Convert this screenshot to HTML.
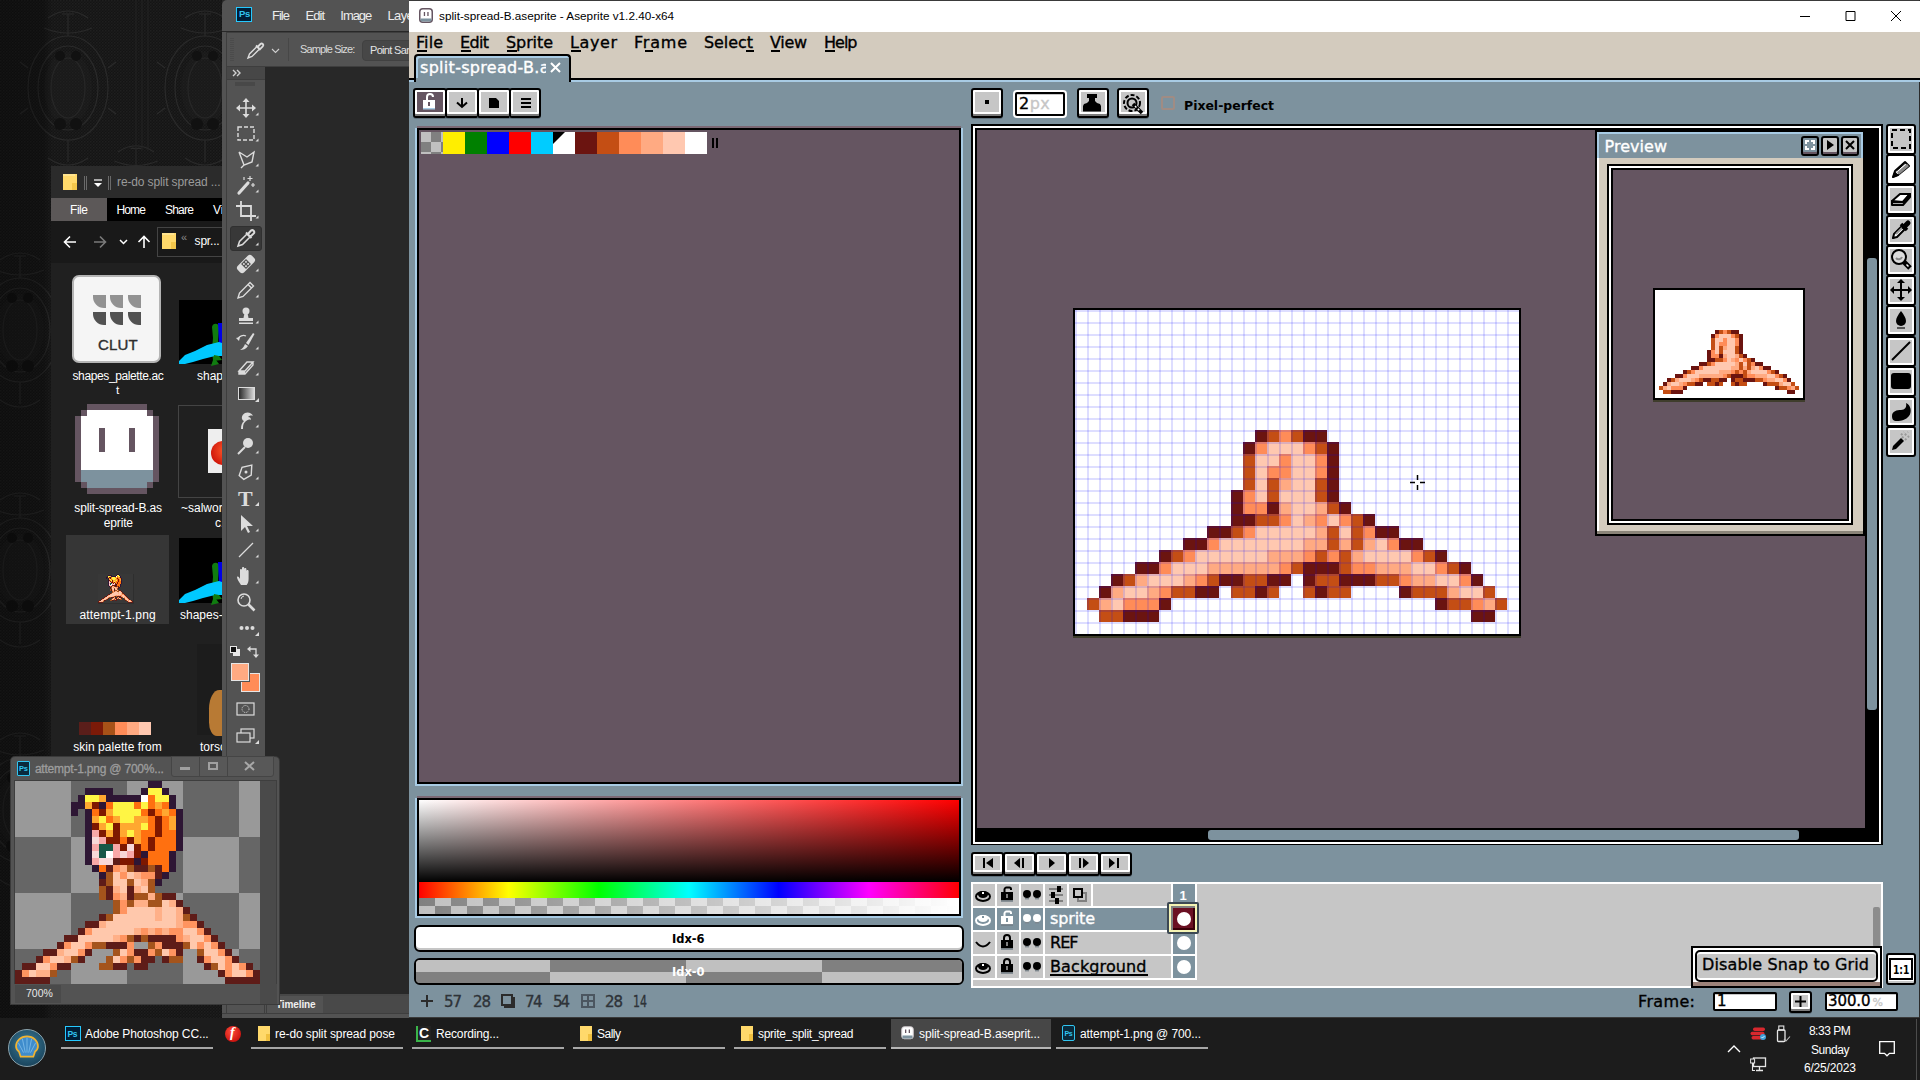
<!DOCTYPE html>
<html lang="en">
<head>
<meta charset="utf-8">
<title>split-spread-B.aseprite - Aseprite v1.2.40-x64</title>
<style>
*{box-sizing:border-box;margin:0;padding:0}
html,body{width:1920px;height:1080px;overflow:hidden;background:#161616}
body{position:relative;font-family:"Liberation Sans",sans-serif;font-size:12px;color:#fff}
.a,.a div{position:absolute}
.t{position:absolute;white-space:nowrap;line-height:1}
svg{position:absolute;overflow:visible}

#desk{left:0;top:0;width:1920px;height:1080px;background:#161616}

#exp{left:0;top:0;width:222px;height:1080px;overflow:hidden}
.lbl{position:absolute;white-space:nowrap;line-height:1;font-size:11.8px;letter-spacing:-0.3px;color:#fff;text-align:center;transform:translateX(-50%)}

#ps{left:0;top:0;width:409px;height:1080px;overflow:hidden}

#ase{left:0;top:0;width:1920px;height:1080px}
.ab{border:2px solid #000;border-radius:3px;background:#c6c6c6;box-shadow:inset 0 -2px 0 #7b7b7b,inset 0 2px 0 #fff,inset 2px 0 0 #fff,inset -2px 0 0 #fff,inset 0 -4px 0 #fff,0 1px 0 #5f707b}
.af{font-family:"DejaVu Sans","Liberation Sans",sans-serif;color:#000;-webkit-text-stroke:0.35px currentColor}
.px{shape-rendering:crispEdges}

#psdoc{left:0;top:0;width:300px;height:1080px}

#tb{left:0;top:1018px;width:1920px;height:62px;background:#1c1c1c}

</style>
</head>
<body>
<!-- desk -->
<div id="desk" class="a">
<svg style="left:0;top:0" width="240" height="1020" viewBox="0 0 240 1020"><defs><pattern id="mesh" width="3" height="3" patternUnits="userSpaceOnUse"><rect width="3" height="3" fill="#141414"/><rect x="0" y="0" width="1.5" height="1.5" fill="#1f1f1f"/><rect x="1.5" y="1.5" width="1.5" height="1.5" fill="#1b1b1b"/></pattern><linearGradient id="lg" x1="0" x2="1"><stop offset="0" stop-color="#000" stop-opacity=".35"/><stop offset="0.18" stop-color="#000" stop-opacity=".3"/><stop offset="0.22" stop-color="#000" stop-opacity="0"/></linearGradient></defs><rect width="240" height="1020" fill="url(#mesh)"/><g transform="translate(68 88) scale(1.0)" fill="none" stroke="#2a2a2a" stroke-width="1.2"><ellipse cx="0" cy="0" rx="40" ry="52"/><ellipse cx="0" cy="0" rx="30" ry="42"/><ellipse cx="0" cy="0" rx="17" ry="30"/><path d="M-40 -20l-8 -6M-40 20l-8 6M40 -20l8 -6M40 20l8 6M0 -52v-22M-6 -74h12M0 52v22"/><path d="M-20 -70q20 -14 40 0M-24 -60q24 10 48 0M-20 70q20 14 40 0"/><ellipse cx="0" cy="0" rx="24" ry="36" fill="#222" fill-opacity=".35" stroke="none"/><circle cx="-8" cy="-32" r="5" fill="#111" stroke="none"/><circle cx="8" cy="-32" r="5" fill="#111" stroke="none"/><circle cx="-8" cy="36" r="6" fill="#111" stroke="none"/><circle cx="8" cy="36" r="6" fill="#111" stroke="none"/></g><g transform="translate(205 88) scale(1.0)" fill="none" stroke="#2a2a2a" stroke-width="1.2"><ellipse cx="0" cy="0" rx="40" ry="52"/><ellipse cx="0" cy="0" rx="30" ry="42"/><ellipse cx="0" cy="0" rx="17" ry="30"/><path d="M-40 -20l-8 -6M-40 20l-8 6M40 -20l8 -6M40 20l8 6M0 -52v-22M-6 -74h12M0 52v22"/><path d="M-20 -70q20 -14 40 0M-24 -60q24 10 48 0M-20 70q20 14 40 0"/><ellipse cx="0" cy="0" rx="24" ry="36" fill="#222" fill-opacity=".35" stroke="none"/><circle cx="-8" cy="-32" r="5" fill="#111" stroke="none"/><circle cx="8" cy="-32" r="5" fill="#111" stroke="none"/><circle cx="-8" cy="36" r="6" fill="#111" stroke="none"/><circle cx="8" cy="36" r="6" fill="#111" stroke="none"/></g><g transform="translate(136 215) scale(0.9)" fill="none" stroke="#2a2a2a" stroke-width="1.2"><ellipse cx="0" cy="0" rx="40" ry="52"/><ellipse cx="0" cy="0" rx="30" ry="42"/><ellipse cx="0" cy="0" rx="17" ry="30"/><path d="M-40 -20l-8 -6M-40 20l-8 6M40 -20l8 -6M40 20l8 6M0 -52v-22M-6 -74h12M0 52v22"/><path d="M-20 -70q20 -14 40 0M-24 -60q24 10 48 0M-20 70q20 14 40 0"/><ellipse cx="0" cy="0" rx="24" ry="36" fill="#222" fill-opacity=".35" stroke="none"/><circle cx="-8" cy="-32" r="5" fill="#111" stroke="none"/><circle cx="8" cy="-32" r="5" fill="#111" stroke="none"/><circle cx="-8" cy="36" r="6" fill="#111" stroke="none"/><circle cx="8" cy="36" r="6" fill="#111" stroke="none"/></g><g transform="translate(20 330) scale(1.0)" fill="none" stroke="#2a2a2a" stroke-width="1.2"><ellipse cx="0" cy="0" rx="40" ry="52"/><ellipse cx="0" cy="0" rx="30" ry="42"/><ellipse cx="0" cy="0" rx="17" ry="30"/><path d="M-40 -20l-8 -6M-40 20l-8 6M40 -20l8 -6M40 20l8 6M0 -52v-22M-6 -74h12M0 52v22"/><path d="M-20 -70q20 -14 40 0M-24 -60q24 10 48 0M-20 70q20 14 40 0"/><ellipse cx="0" cy="0" rx="24" ry="36" fill="#222" fill-opacity=".35" stroke="none"/><circle cx="-8" cy="-32" r="5" fill="#111" stroke="none"/><circle cx="8" cy="-32" r="5" fill="#111" stroke="none"/><circle cx="-8" cy="36" r="6" fill="#111" stroke="none"/><circle cx="8" cy="36" r="6" fill="#111" stroke="none"/></g><g transform="translate(20 570) scale(1.0)" fill="none" stroke="#2a2a2a" stroke-width="1.2"><ellipse cx="0" cy="0" rx="40" ry="52"/><ellipse cx="0" cy="0" rx="30" ry="42"/><ellipse cx="0" cy="0" rx="17" ry="30"/><path d="M-40 -20l-8 -6M-40 20l-8 6M40 -20l8 -6M40 20l8 6M0 -52v-22M-6 -74h12M0 52v22"/><path d="M-20 -70q20 -14 40 0M-24 -60q24 10 48 0M-20 70q20 14 40 0"/><ellipse cx="0" cy="0" rx="24" ry="36" fill="#222" fill-opacity=".35" stroke="none"/><circle cx="-8" cy="-32" r="5" fill="#111" stroke="none"/><circle cx="8" cy="-32" r="5" fill="#111" stroke="none"/><circle cx="-8" cy="36" r="6" fill="#111" stroke="none"/><circle cx="8" cy="36" r="6" fill="#111" stroke="none"/></g><g transform="translate(20 810) scale(1.0)" fill="none" stroke="#2a2a2a" stroke-width="1.2"><ellipse cx="0" cy="0" rx="40" ry="52"/><ellipse cx="0" cy="0" rx="30" ry="42"/><ellipse cx="0" cy="0" rx="17" ry="30"/><path d="M-40 -20l-8 -6M-40 20l-8 6M40 -20l8 -6M40 20l8 6M0 -52v-22M-6 -74h12M0 52v22"/><path d="M-20 -70q20 -14 40 0M-24 -60q24 10 48 0M-20 70q20 14 40 0"/><ellipse cx="0" cy="0" rx="24" ry="36" fill="#222" fill-opacity=".35" stroke="none"/><circle cx="-8" cy="-32" r="5" fill="#111" stroke="none"/><circle cx="8" cy="-32" r="5" fill="#111" stroke="none"/><circle cx="-8" cy="36" r="6" fill="#111" stroke="none"/><circle cx="8" cy="36" r="6" fill="#111" stroke="none"/></g><path d="M136 0v150M142 0v150M148 0v150" stroke="#222" stroke-width="1"/><rect width="240" height="1020" fill="url(#lg)"/></svg>
</div><!-- explorer -->
<div id="exp" class="a">
<div class="" style="left:51px;top:166px;width:175px;height:600px;background:#202020;"></div>
<div class="" style="left:51px;top:166px;width:175px;height:32px;background:#2b2b2b;"></div>
<svg style="left:63px;top:174px" width="14" height="17" viewBox="0 0 14 17" ><g transform="scale(1.0)"><path d="M0 0h11l3 0v16h-14z" fill="#ffd96b"/><path d="M9 9h5v7h-5z" fill="#f3c64a"/><path d="M0 0h12v2h-12z" fill="#ffe48f"/></g></svg>
<div class="" style="left:84px;top:176px;width:1px;height:14px;background:#6a6a6a;"></div>
<div class="" style="left:86px;top:176px;width:1px;height:14px;background:#6a6a6a;"></div>
<svg style="left:93px;top:179px" width="10" height="10" viewBox="0 0 10 10" ><path d="M1 1h8" stroke="#fff" stroke-width="1.2"/><path d="M1 4h8l-4 4z" fill="#fff"/></svg>
<div class="" style="left:108px;top:176px;width:1px;height:14px;background:#6a6a6a;"></div>
<div class="" style="left:110px;top:176px;width:1px;height:14px;background:#6a6a6a;"></div>
<div class="t" style="left:117px;top:176px;font-size:12px;color:#9a9a9a;letter-spacing:-0.121px;font-family:'Liberation Sans',sans-serif;">re-do split spread ...</div>
<div class="" style="left:51px;top:198px;width:175px;height:23px;background:#000;"></div>
<div class="" style="left:51px;top:198px;width:56px;height:23px;background:#5c5858;"></div>
<div class="t" style="left:70px;top:204px;font-size:12px;color:#fff;letter-spacing:-0.445px;font-family:'Liberation Sans',sans-serif;">File</div>
<div class="t" style="left:116.4px;top:204px;font-size:12px;color:#fff;letter-spacing:-0.837px;font-family:'Liberation Sans',sans-serif;">Home</div>
<div class="t" style="left:165px;top:204px;font-size:12px;color:#fff;letter-spacing:-0.805px;font-family:'Liberation Sans',sans-serif;">Share</div>
<div class="t" style="left:213px;top:204px;font-size:12px;color:#fff;letter-spacing:0.069px;font-family:'Liberation Sans',sans-serif;">View</div>
<div class="" style="left:51px;top:221px;width:175px;height:42px;background:#191919;"></div>
<svg style="left:63px;top:235px" width="14" height="14" viewBox="0 0 14 14" ><path d="M13 7H2M7 1.5L1.5 7L7 12.5" stroke="#fff" stroke-width="1.6" fill="none"/></svg>
<svg style="left:93px;top:235px" width="14" height="14" viewBox="0 0 14 14" ><path d="M1 7h11M7 1.5L12.5 7L7 12.5" stroke="#7a7a7a" stroke-width="1.6" fill="none"/></svg>
<svg style="left:119px;top:238px" width="9" height="8" viewBox="0 0 9 8" ><path d="M1 2l3.5 3.5L8 2" stroke="#fff" stroke-width="1.5" fill="none"/></svg>
<svg style="left:137px;top:235px" width="14" height="14" viewBox="0 0 14 14" ><path d="M7 13V2M1.5 7L7 1.5L12.5 7" stroke="#fff" stroke-width="1.6" fill="none"/></svg>
<div style="left:157px;top:227px;width:80px;height:30px;border:1px solid #444;background:#191919"></div>
<svg style="left:162px;top:233px" width="14" height="17" viewBox="0 0 14 17" ><g transform="scale(1.0)"><path d="M0 0h11l3 0v16h-14z" fill="#ffd96b"/><path d="M9 9h5v7h-5z" fill="#f3c64a"/><path d="M0 0h12v2h-12z" fill="#ffe48f"/></g></svg>
<div class="t" style="left:181px;top:232px;font-size:11px;color:#8a8a8a;font-family:'Liberation Sans',sans-serif;">«</div>
<div class="t" style="left:194.6px;top:235px;font-size:12px;color:#fff;letter-spacing:-0.202px;font-family:'Liberation Sans',sans-serif;">spr...</div>
<div style="left:72px;top:275px;width:89px;height:88px;background:#f5f5f5;border:2px solid #b4b4b4;border-radius:7px"></div>
<div style="left:93px;top:295px;width:13px;height:13px;background:#929292;border-radius:0 0 0 11px"></div>
<div style="left:110px;top:295px;width:13px;height:13px;background:#929292;border-radius:0 0 0 11px"></div>
<div style="left:128px;top:295px;width:13px;height:13px;background:#929292;border-radius:0 0 0 11px"></div>
<div style="left:93px;top:312px;width:13px;height:13px;background:#525252;border-radius:0 0 0 11px"></div>
<div style="left:110px;top:312px;width:13px;height:13px;background:#525252;border-radius:0 0 0 11px"></div>
<div style="left:128px;top:312px;width:13px;height:13px;background:#525252;border-radius:0 0 0 11px"></div>
<div class="t" style="left:98px;top:337px;font-size:15px;color:#2e2e2e;font-family:'Liberation Sans',sans-serif;letter-spacing:0.2px;-webkit-text-stroke:0.4px #2e2e2e;">CLUT</div>
<div class="t" style="left:72.5px;top:370px;font-size:12px;color:#fff;letter-spacing:-0.382px;font-family:'Liberation Sans',sans-serif;">shapes_palette.ac</div>
<div class="lbl" style="left:117.5px;top:385px">t</div>
<div class="" style="left:179px;top:300px;width:50px;height:64px;background:#000;"></div><svg style="left:179px;top:300px" width="50" height="64" viewBox="0 0 50 64" ><path d="M33 27q1-4 5-3q3 1 2 6l-1 10l1 12l-3 8l3 4l-8 2l2-6l-1-10l1-12z" fill="#107c10"/><path d="M39 23h6v22h-5z" fill="#0000e6"/><path d="M0 61L6 55L16 51L28 45L40 42L46 44V56L36 56L24 59L14 62L6 64L0 64z" fill="#00c8ff"/><path d="M35 55l5 1l3 4l-9 1z" fill="#107c10"/></svg>
<div class="t" style="left:197px;top:370px;font-size:12px;color:#fff;font-family:'Liberation Sans',sans-serif;">shapes</div>
<div class="" style="left:87px;top:404px;width:60px;height:6px;background:#655561;"></div>
<div class="" style="left:81px;top:410px;width:72px;height:6px;background:#655561;"></div>
<div class="" style="left:75px;top:416px;width:84px;height:66px;background:#655561;"></div>
<div class="" style="left:81px;top:482px;width:72px;height:6px;background:#655561;"></div>
<div class="" style="left:87px;top:488px;width:60px;height:6px;background:#655561;"></div>
<div class="" style="left:87px;top:410px;width:60px;height:6px;background:#fff;"></div>
<div class="" style="left:81px;top:416px;width:72px;height:54px;background:#fff;"></div>
<div class="" style="left:81px;top:470px;width:72px;height:12px;background:#7d929e;"></div>
<div class="" style="left:87px;top:482px;width:60px;height:6px;background:#7d929e;"></div>
<div class="" style="left:99px;top:428px;width:6px;height:24px;background:#655561;"></div>
<div class="" style="left:129px;top:428px;width:6px;height:24px;background:#655561;"></div>
<div class="t" style="left:74.3px;top:502px;font-size:12px;color:#fff;letter-spacing:-0.146px;font-family:'Liberation Sans',sans-serif;">split-spread-B.as</div>
<div class="t" style="left:103.8px;top:517px;font-size:12px;color:#fff;letter-spacing:-0.164px;font-family:'Liberation Sans',sans-serif;">eprite</div>
<div style="left:178px;top:405px;width:60px;height:93px;border:1px solid #444"></div>
<div class="" style="left:208px;top:429px;width:20px;height:44px;background:#eee;"></div>
<div style="left:211px;top:441px;width:24px;height:24px;border-radius:50%;background:radial-gradient(circle at 60% 40%,#ff5a2a,#c00000)"></div>
<div class="t" style="left:181px;top:502px;font-size:12px;color:#fff;font-family:'Liberation Sans',sans-serif;">~salwork</div>
<div class="t" style="left:215px;top:517px;font-size:12px;color:#fff;font-family:'Liberation Sans',sans-serif;">c.</div>
<div class="" style="left:66px;top:535px;width:103px;height:89px;background:#363636;"></div>
<div class="" style="left:98px;top:574px;width:36px;height:30px;background:#2e2e2e;"></div>
<div class="" style="left:98px;top:574px;width:35px;height:29px;background:#383838;"></div>
<svg style="left:98px;top:574px" width="35" height="29" viewBox="0 0 35 29" ><use href="#spr1" transform="scale(0.142857)"/></svg>
<div class="t" style="left:79.4px;top:609px;font-size:12px;color:#fff;letter-spacing:0.196px;font-family:'Liberation Sans',sans-serif;">attempt-1.png</div>
<div class="" style="left:179px;top:538px;width:50px;height:65px;background:#000;"></div><svg style="left:179px;top:538px" width="50" height="65" viewBox="0 0 50 65" ><path d="M33 28q1-4 5-3q3 1 2 6l-1 10l1 12l-3 8l3 4l-8 2l2-6l-1-10l1-12z" fill="#107c10"/><path d="M39 24h6v22h-5z" fill="#0000e6"/><path d="M0 62L6 56L16 52L28 46L40 43L46 45V57L36 57L24 60L14 63L6 65L0 65z" fill="#00c8ff"/><path d="M35 56l5 1l3 4l-9 1z" fill="#107c10"/></svg>
<div class="t" style="left:180px;top:609px;font-size:12px;color:#fff;font-family:'Liberation Sans',sans-serif;">shapes-</div>
<div class="" style="left:79px;top:722px;width:12px;height:13px;background:#5a1e1a;"></div>
<div class="" style="left:91px;top:722px;width:12px;height:13px;background:#7c1a08;"></div>
<div class="" style="left:103px;top:722px;width:12px;height:13px;background:#a85218;"></div>
<div class="" style="left:115px;top:722px;width:12px;height:13px;background:#ff8c58;"></div>
<div class="" style="left:127px;top:722px;width:12px;height:13px;background:#ffaa82;"></div>
<div class="" style="left:139px;top:722px;width:12px;height:13px;background:#ffc8b0;"></div>
<div class="t" style="left:73.3px;top:741px;font-size:12px;color:#fff;letter-spacing:0.029px;font-family:'Liberation Sans',sans-serif;">skin palette from</div>
<div class="" style="left:197px;top:644px;width:40px;height:91px;background:#1c1c1c;"></div>
<div style="left:209px;top:690px;width:26px;height:46px;border-radius:40% 40% 20% 30%;background:#b87a34"></div>
<div class="t" style="left:200px;top:741px;font-size:12px;color:#fff;font-family:'Liberation Sans',sans-serif;">torso</div>
</div><!-- ps -->
<div id="ps" class="a">
<div class="" style="left:222px;top:0px;width:190px;height:1018px;background:#282828;"></div>
<div style="left:222px;top:0;width:190px;height:31px;background:#535353;border-radius:5px 0 0 0"></div>
<div class="" style="left:222px;top:32px;width:190px;height:34px;background:#535353;"></div>
<div class="" style="left:222px;top:66px;width:190px;height:1px;background:#383838;"></div>
<div class="" style="left:222px;top:32px;width:5px;height:986px;background:#535353;"></div>
<div style="left:226px;top:32px;width:200px;height:35px;border:1px solid #3e3e3e;border-right:none"></div>
<div style="left:236px;top:7px;width:16px;height:15px;background:#001e36;border:1.5px solid #26c9ff"></div>
<div class="t" style="left:239px;top:9px;font-size:9.5px;color:#31c5f0;font-family:'Liberation Sans',sans-serif;font-weight:bold;letter-spacing:-0.3px">Ps</div>
<div class="t" style="left:272px;top:9px;font-size:13px;color:#ececec;letter-spacing:-0.982px;font-family:'Liberation Sans',sans-serif;">File</div>
<div class="t" style="left:305.4px;top:9px;font-size:13px;color:#ececec;letter-spacing:-0.934px;font-family:'Liberation Sans',sans-serif;">Edit</div>
<div class="t" style="left:340.3px;top:9px;font-size:13px;color:#ececec;letter-spacing:-1.033px;font-family:'Liberation Sans',sans-serif;">Image</div>
<div class="t" style="left:387.5px;top:9px;font-size:13px;color:#ececec;letter-spacing:-0.63px;font-family:'Liberation Sans',sans-serif;">Layer</div>
<svg style="left:230px;top:38px" width="4" height="24" viewBox="0 0 4 24" ><path d="M1 0v24M3 0v24" stroke="#444" stroke-width="1" stroke-dasharray="1 1"/></svg>
<svg style="left:246px;top:42px" width="18" height="18" viewBox="0 0 18 18" ><path d="M2 16l1.5-4L11 4.5l2.5 2.5L6 14.5z" fill="none" stroke="#dcdcdc" stroke-width="1.4"/><path d="M10 3.5l4.5 4.5M11.5 5l3-3a1.6 1.6 0 0 1 2.3 2.3l-3 3" stroke="#dcdcdc" stroke-width="1.8" fill="none"/></svg>
<svg style="left:271px;top:48px" width="9" height="6" viewBox="0 0 9 6" ><path d="M1 1l3.5 3.5L8 1" stroke="#cfcfcf" stroke-width="1.1" fill="none"/></svg>
<div class="" style="left:288px;top:38px;width:1px;height:23px;background:#474747;"></div>
<div class="t" style="left:300px;top:44px;font-size:11px;color:#dadada;letter-spacing:-0.864px;font-family:'Liberation Sans',sans-serif;">Sample Size:</div>
<div style="left:362px;top:40px;width:80px;height:21px;background:#474747;border:1px solid #414141;border-radius:4px"></div>
<div class="t" style="left:370px;top:45px;font-size:11px;color:#e4e4e4;letter-spacing:-0.675px;font-family:'Liberation Sans',sans-serif;">Point Sample</div>
<div class="" style="left:227px;top:67px;width:38px;height:690px;background:#535353;"></div>
<div class="" style="left:227px;top:67px;width:38px;height:12px;background:#474747;"></div>
<div class="" style="left:226px;top:67px;width:1px;height:690px;background:#3e3e3e;"></div>
<div class="" style="left:227px;top:79px;width:38px;height:1px;background:#3e3e3e;"></div>
<svg style="left:232px;top:69px" width="10" height="8" viewBox="0 0 10 8" ><path d="M1 1l3 3l-3 3M5 1l3 3l-3 3" stroke="#d0d0d0" stroke-width="1.4" fill="none"/></svg>
<svg style="left:236px;top:82px" width="20" height="5" viewBox="0 0 20 5" ><path d="M0 0v4M2 0v4M4 0v4M6 0v4M8 0v4M10 0v4M12 0v4M14 0v4M16 0v4M18 0v4" stroke="#3e3e3e" stroke-width="1"/></svg>
<div style="left:230px;top:226px;width:32px;height:25px;background:#383838;border-radius:3px;border:1px solid #303030"></div>
<svg style="left:236px;top:98px" width="20" height="20" viewBox="0 0 20 20" ><path d="M10 2v16M2 10h16" stroke="#dcdcdc" fill="none" stroke-width="1.6"/><path d="M10 0l3.5 4h-7zM10 20l3.5-4h-7zM0 10l4-3.5v7zM20 10l-4-3.5v7z" fill="#dcdcdc"/></svg>
<svg style="left:255px;top:112px" width="4" height="4" viewBox="0 0 4 4" ><path d="M3.5 0.5v3h-3z" fill="#dcdcdc"/></svg>
<svg style="left:236px;top:124px" width="20" height="20" viewBox="0 0 20 20" ><rect x="2" y="3" width="16" height="13" stroke="#dcdcdc" fill="none" stroke-width="1.4" stroke-dasharray="4 2"/></svg>
<svg style="left:255px;top:138px" width="4" height="4" viewBox="0 0 4 4" ><path d="M3.5 0.5v3h-3z" fill="#dcdcdc"/></svg>
<svg style="left:236px;top:149px" width="20" height="20" viewBox="0 0 20 20" ><path d="M3 3l8 5l7-5l-2 10l-8 3l-3 3M3 3l5 13" stroke="#dcdcdc" fill="none" stroke-width="1.4"/></svg>
<svg style="left:255px;top:163px" width="4" height="4" viewBox="0 0 4 4" ><path d="M3.5 0.5v3h-3z" fill="#dcdcdc"/></svg>
<svg style="left:236px;top:175px" width="20" height="20" viewBox="0 0 20 20" ><path d="M3 18l9-10" stroke="#dcdcdc" fill="none" stroke-width="3.2" stroke-linecap="round"/><path d="M14 1v5M11.5 3.5h5M17 8v4M15 10h4M8 2v3" stroke="#dcdcdc" fill="none" stroke-width="1.2"/></svg>
<svg style="left:255px;top:189px" width="4" height="4" viewBox="0 0 4 4" ><path d="M3.5 0.5v3h-3z" fill="#dcdcdc"/></svg>
<svg style="left:236px;top:201px" width="20" height="20" viewBox="0 0 20 20" ><path d="M5 0v15h15M0 5h15v15" stroke="#dcdcdc" fill="none" stroke-width="1.8"/></svg>
<svg style="left:255px;top:215px" width="4" height="4" viewBox="0 0 4 4" ><path d="M3.5 0.5v3h-3z" fill="#dcdcdc"/></svg>
<svg style="left:236px;top:228px" width="20" height="20" viewBox="0 0 20 20" ><path d="M2 18l1.5-4.5L11 6l3 3L6.5 16.5z" stroke="#dcdcdc" fill="none" stroke-width="1.5"/><path d="M10 4.5l5.5 5.5M12 6l3-3.4a2 2 0 0 1 2.8 2.8L14.5 8.5" stroke="#dcdcdc" fill="none" stroke-width="2"/></svg>
<svg style="left:255px;top:242px" width="4" height="4" viewBox="0 0 4 4" ><path d="M3.5 0.5v3h-3z" fill="#dcdcdc"/></svg>
<svg style="left:236px;top:254px" width="20" height="20" viewBox="0 0 20 20" ><g transform="rotate(-45 10 10)"><rect x="0" y="5.5" width="20" height="9" rx="3" fill="#dcdcdc"/><rect x="6.5" y="6.5" width="7" height="7" fill="#535353"/><circle cx="8.5" cy="8.5" r="1" fill="#dcdcdc"/><circle cx="11.5" cy="8.5" r="1" fill="#dcdcdc"/><circle cx="8.5" cy="11.5" r="1" fill="#dcdcdc"/><circle cx="11.5" cy="11.5" r="1" fill="#dcdcdc"/></g></svg>
<svg style="left:255px;top:268px" width="4" height="4" viewBox="0 0 4 4" ><path d="M3.5 0.5v3h-3z" fill="#dcdcdc"/></svg>
<svg style="left:236px;top:280px" width="20" height="20" viewBox="0 0 20 20" ><path d="M2 18l1.5-5L14 2.5l3.5 3.5L7 16.5zM12 4.5l3.5 3.5" stroke="#dcdcdc" fill="none" stroke-width="1.4"/></svg>
<svg style="left:255px;top:294px" width="4" height="4" viewBox="0 0 4 4" ><path d="M3.5 0.5v3h-3z" fill="#dcdcdc"/></svg>
<svg style="left:236px;top:306px" width="20" height="20" viewBox="0 0 20 20" ><circle cx="10" cy="5" r="3.5" fill="#dcdcdc"/><path d="M8.5 7h3l1 5h-5z" fill="#dcdcdc"/><rect x="3" y="12" width="14" height="3" fill="#dcdcdc"/><rect x="3" y="16.5" width="14" height="1.5" fill="#dcdcdc"/></svg>
<svg style="left:255px;top:320px" width="4" height="4" viewBox="0 0 4 4" ><path d="M3.5 0.5v3h-3z" fill="#dcdcdc"/></svg>
<svg style="left:236px;top:332px" width="20" height="20" viewBox="0 0 20 20" ><path d="M4 18c2-1 4-3 5-6l3 2c-2 3-5 4-8 4z" fill="#dcdcdc"/><path d="M10 11l7-10l1.5 1l-6 11z" fill="#dcdcdc"/><path d="M2 7a6 6 0 0 1 8-3" stroke="#dcdcdc" fill="none" stroke-width="1.3"/><path d="M0 6l3 3l1-4z" fill="#dcdcdc"/></svg>
<svg style="left:255px;top:346px" width="4" height="4" viewBox="0 0 4 4" ><path d="M3.5 0.5v3h-3z" fill="#dcdcdc"/></svg>
<svg style="left:236px;top:358px" width="20" height="20" viewBox="0 0 20 20" ><path d="M3 13l8-9h6l-8 9zM3 13v3h6l8-9V4" stroke="#dcdcdc" fill="none" stroke-width="1.4"/><path d="M3 13h6v3h-6z" fill="#dcdcdc"/></svg>
<svg style="left:255px;top:372px" width="4" height="4" viewBox="0 0 4 4" ><path d="M3.5 0.5v3h-3z" fill="#dcdcdc"/></svg>
<div style="left:238px;top:387px;width:17px;height:13px;border:1px solid #dcdcdc;background:linear-gradient(to right,#2a2a2a,#d8d8d8)"></div>
<svg style="left:255px;top:398px" width="4" height="4" viewBox="0 0 4 4" ><path d="M4 0v4h-4z" fill="#dcdcdc"/></svg>
<svg style="left:236px;top:410px" width="20" height="20" viewBox="0 0 20 20" ><path d="M5 19c0-4 1-6 3-8c-3-1-3-6 1-8c3-1.500 7 0 8 3c-2-1-4 0-5 1c2 0 3 1 3 3c-2-1-4 0-6 2c-2 2-2 4-2 7z" fill="#dcdcdc"/></svg>
<svg style="left:255px;top:424px" width="4" height="4" viewBox="0 0 4 4" ><path d="M3.5 0.5v3h-3z" fill="#dcdcdc"/></svg>
<svg style="left:236px;top:436px" width="20" height="20" viewBox="0 0 20 20" ><circle cx="12" cy="7" r="5" fill="#dcdcdc"/><path d="M9 11l-7 7" stroke="#dcdcdc" fill="none" stroke-width="2"/></svg>
<svg style="left:255px;top:450px" width="4" height="4" viewBox="0 0 4 4" ><path d="M3.5 0.5v3h-3z" fill="#dcdcdc"/></svg>
<svg style="left:236px;top:462px" width="20" height="20" viewBox="0 0 20 20" ><path d="M10 1l6 8l-3 8h-6l-3-8z" stroke="#dcdcdc" fill="none" stroke-width="1.4" transform="rotate(40 10 10)"/><circle cx="10" cy="10" r="1.5" fill="#dcdcdc"/></svg>
<svg style="left:255px;top:476px" width="4" height="4" viewBox="0 0 4 4" ><path d="M3.5 0.5v3h-3z" fill="#dcdcdc"/></svg>
<div class="t" style="left:238px;top:488px;font-size:22px;color:#dcdcdc;font-family:'Liberation Serif',serif;font-weight:bold">T</div>
<svg style="left:255px;top:502px" width="4" height="4" viewBox="0 0 4 4" ><path d="M4 0v4h-4z" fill="#dcdcdc"/></svg>
<svg style="left:236px;top:514px" width="20" height="20" viewBox="0 0 20 20" ><path d="M5 1v16l4-4l3 6l2-1l-3-6h6z" fill="#dcdcdc"/></svg>
<svg style="left:255px;top:528px" width="4" height="4" viewBox="0 0 4 4" ><path d="M3.5 0.5v3h-3z" fill="#dcdcdc"/></svg>
<svg style="left:236px;top:540px" width="20" height="20" viewBox="0 0 20 20" ><path d="M3 17L17 3" stroke="#dcdcdc" fill="none" stroke-width="1.3"/></svg>
<svg style="left:255px;top:554px" width="4" height="4" viewBox="0 0 4 4" ><path d="M3.5 0.5v3h-3z" fill="#dcdcdc"/></svg>
<svg style="left:236px;top:566px" width="20" height="20" viewBox="0 0 20 20" ><path d="M5 19c-2-3-4-6-4-8c1-1 2 0 3 2V4c0-1.500 2-1.500 2 0V2c0-1.500 2.200-1.500 2.200 0v1c0-1.500 2.200-1.500 2.200 0v2c0-1.500 2.200-1.500 2.200 0v8c0 3-1 5-2 6z" fill="#dcdcdc"/></svg>
<svg style="left:255px;top:580px" width="4" height="4" viewBox="0 0 4 4" ><path d="M3.5 0.5v3h-3z" fill="#dcdcdc"/></svg>
<svg style="left:236px;top:592px" width="20" height="20" viewBox="0 0 20 20" ><circle cx="8" cy="8" r="6" stroke="#dcdcdc" fill="none" stroke-width="1.600"/><path d="M12.500 12.500l6 6" stroke="#dcdcdc" fill="none" stroke-width="2.600"/><path d="M5 7a3.500 3.500 0 0 1 3-3" stroke="#dcdcdc" fill="none" stroke-width="1"/></svg>
<svg style="left:239px;top:626px" width="16" height="4" viewBox="0 0 16 4" ><circle cx="2.500" cy="2" r="2" fill="#dcdcdc"/><circle cx="8" cy="2" r="2" fill="#dcdcdc"/><circle cx="13.500" cy="2" r="2" fill="#dcdcdc"/></svg>
<svg style="left:255px;top:632px" width="4" height="4" viewBox="0 0 4 4" ><path d="M4 0v4h-4z" fill="#dcdcdc"/></svg>
<div class="" style="left:233px;top:649px;width:7px;height:7px;background:#e8e8e8;"></div>
<div class="" style="left:230px;top:646px;width:7px;height:7px;background:#111;"></div>
<div style="left:230px;top:646px;width:7px;height:7px;border:1px solid #e8e8e8"></div>
<svg style="left:247px;top:646px" width="12" height="12" viewBox="0 0 12 12" ><path d="M3 3h6v6" stroke="#dcdcdc" fill="none" stroke-width="1.3"/><path d="M0 3l3.500-3v6zM9 12l-3-3.500h6z" fill="#dcdcdc"/></svg>
<div style="left:241px;top:673px;width:19px;height:19px;background:#ff8c58;border:1px solid #e6e6e6"></div>
<div style="left:231px;top:663px;width:18px;height:18px;background:#ffaa82;border:1px solid #e6e6e6;box-shadow:0 0 0 1px #535353"></div>
<svg style="left:236px;top:702px" width="20" height="16" viewBox="0 0 20 16" ><rect x="1" y="1" width="17" height="12" stroke="#dcdcdc" fill="none" stroke-width="1.2"/><circle cx="9.500" cy="7" r="3.500" stroke="#dcdcdc" fill="none" stroke-width="1" stroke-dasharray="1 1"/></svg>
<svg style="left:236px;top:728px" width="20" height="18" viewBox="0 0 20 18" ><rect x="5" y="1" width="13" height="9" stroke="#dcdcdc" fill="none" stroke-width="1.200"/><rect x="1" y="5" width="13" height="9" fill="#535353" stroke="#dcdcdc" stroke-width="1.200"/></svg>
<svg style="left:255px;top:740px" width="4" height="4" viewBox="0 0 4 4" ><path d="M4 0v4h-4z" fill="#dcdcdc"/></svg>
<div class="" style="left:222px;top:994px;width:190px;height:24px;background:#535353;"></div>
<div class="" style="left:222px;top:994px;width:190px;height:2px;background:#474747;"></div>
<div class="" style="left:323px;top:996px;width:90px;height:17px;background:#494949;"></div>
<div class="" style="left:222px;top:1013px;width:190px;height:1px;background:#3e3e3e;"></div>
<div style="left:226px;top:1004px;width:39px;height:10px;border:1px solid #3e3e3e;border-bottom:none"></div>
<div style="left:266px;top:996px;width:57px;height:18px;border-left:1px solid #3e3e3e"></div>
<div class="t" style="left:276px;top:1000px;font-size:10px;color:#f0f0f0;font-family:'Liberation Sans',sans-serif;font-weight:bold;letter-spacing:-0.1px">Timeline</div>
</div><!-- ase -->
<div id="ase" class="a">
<div class="" style="left:409px;top:0px;width:1511px;height:1018px;background:#7d929e;"></div>
<div class="" style="left:409px;top:0px;width:1511px;height:1px;background:#3a3a3a;"></div>
<div class="" style="left:409px;top:1017px;width:1511px;height:1px;background:#3a3a3a;"></div>
<div class="" style="left:1919px;top:0px;width:1px;height:1018px;background:#2b2b2b;"></div>
<div class="" style="left:409px;top:1px;width:1511px;height:31px;background:#fff;"></div>
<svg class="" style="left:419px;top:8px" width="14" height="15" viewBox="0 0 14 15" ><rect x="0.750" y="0.750" width="12.500" height="13.500" rx="3" fill="#fff" stroke="#655561" stroke-width="1.500"/><path d="M1.500 10.500h11v1.500a1.500 1.500 0 0 1-1.500 1.500h-8a1.500 1.500 0 0 1-1.500-1.500z" fill="#7d929e"/><rect x="4.800" y="4" width="1.300" height="4" fill="#655561"/><rect x="8.300" y="4" width="1.300" height="4" fill="#655561"/></svg>
<div class="t" style="left:439px;top:10px;font-size:11.75px;color:#000;font-family:'Liberation Sans',sans-serif;">split-spread-B.aseprite - Aseprite v1.2.40-x64</div>
<svg class="" style="left:1790px;top:0px" width="130" height="32" viewBox="0 0 130 32" ><path d="M10 16.5h10M56 11.5h9v9h-9zM101 11l10 10M111 11l-10 10" stroke="#000" stroke-width="1" fill="none"/></svg>
<div class="" style="left:409px;top:32px;width:1511px;height:47px;background:#d3cbbe;"></div>
<div class="t af" style="left:416px;top:35px;font-size:16px;color:#000;letter-spacing:0.076px;">File</div>
<div class="t af" style="left:460px;top:35px;font-size:16px;color:#000;letter-spacing:-0.662px;">Edit</div>
<div class="t af" style="left:506px;top:35px;font-size:16px;color:#000;letter-spacing:-0.091px;">Sprite</div>
<div class="t af" style="left:570px;top:35px;font-size:16px;color:#000;letter-spacing:0.598px;">Layer</div>
<div class="t af" style="left:634px;top:35px;font-size:16px;color:#000;letter-spacing:0.787px;">Frame</div>
<div class="t af" style="left:704px;top:35px;font-size:16px;color:#000;letter-spacing:-0.072px;">Select</div>
<div class="t af" style="left:770px;top:35px;font-size:16px;color:#000;letter-spacing:-0.323px;">View</div>
<div class="t af" style="left:824px;top:35px;font-size:16px;color:#000;letter-spacing:-0.992px;">Help</div>
<div class="" style="left:416.5px;top:50px;width:10px;height:2px;background:#000;"></div>
<div class="" style="left:460.5px;top:50px;width:10px;height:2px;background:#000;"></div>
<div class="" style="left:506.5px;top:50px;width:10px;height:2px;background:#000;"></div>
<div class="" style="left:570.5px;top:50px;width:10px;height:2px;background:#000;"></div>
<div class="" style="left:645px;top:50px;width:8px;height:2px;background:#000;"></div>
<div class="" style="left:746px;top:50px;width:8px;height:2px;background:#000;"></div>
<div class="" style="left:771px;top:50px;width:9px;height:2px;background:#000;"></div>
<div class="" style="left:824.5px;top:50px;width:10px;height:2px;background:#000;"></div>
<div class="" style="left:409px;top:78px;width:1511px;height:2px;background:#000;"></div>
<div class="" style="left:409px;top:80px;width:1511px;height:2px;background:#a8cbe4;"></div>
<div style="left:414px;top:54px;width:157px;height:28px;background:#7d929e;border:2px solid #000;border-bottom:none;border-radius:4px 4px 0 0;box-shadow:inset 2px 2px 0 #a8cbe4"></div>
<div class="" style="left:416px;top:78px;width:153px;height:4px;background:#7d929e;"></div>
<div class="t af" style="left:420px;top:60px;font-size:16px;color:#fff;width:126px;overflow:hidden;letter-spacing:0.3px">split-spread-B.a</div>
<svg class="" style="left:550px;top:62px" width="12" height="12" viewBox="0 0 12 12" ><path d="M1 1l9 9M10 1l-9 9" stroke="#fff" stroke-width="2" fill="none"/></svg>
<div class="ab" style="left:413px;top:88px;width:34px;height:30px;background:#655561;"></div>
<div class="ab" style="left:445px;top:88px;width:34px;height:30px;background:#c6c6c6;"></div>
<div class="ab" style="left:477px;top:88px;width:34px;height:30px;background:#c6c6c6;"></div>
<div class="ab" style="left:509px;top:88px;width:32px;height:30px;background:#c6c6c6;"></div>
<svg class="" style="left:422px;top:93px" width="14" height="17" viewBox="0 0 14 17" ><path d="M5 7V4a3 3 0 0 1 6 0" stroke="#fff" stroke-width="2" fill="none"/><rect x="1" y="7" width="12" height="8" fill="#fff"/><rect x="1" y="15" width="12" height="1.500" fill="#a8cbe4"/><rect x="6" y="9" width="2" height="4" fill="#655561"/></svg>
<svg class="" style="left:456px;top:98px" width="12" height="10" viewBox="0 0 12 10" ><path d="M6 0v9" stroke="#000" stroke-width="2"/><path d="M1 4.500l5 4.500l5-4.500" stroke="#000" stroke-width="2" fill="none"/></svg>
<svg class="" style="left:489px;top:98px" width="10" height="10" viewBox="0 0 10 10" ><path d="M0 0h7l3 3v7h-10z" fill="#000"/></svg>
<svg class="" style="left:521px;top:98px" width="10" height="10" viewBox="0 0 10 10" ><rect y="0" width="10" height="2" fill="#000"/><rect y="4" width="10" height="2" fill="#000"/><rect y="8" width="10" height="2" fill="#000"/></svg>
<div class="" style="left:415px;top:128px;width:548px;height:658px;background:#a8cbe4;"></div>
<div class="" style="left:415px;top:126px;width:548px;height:2px;background:#7d929e;"></div>
<div class="" style="left:417px;top:126px;width:544px;height:2px;background:#7b6874;"></div>
<div class="" style="left:417px;top:128px;width:544px;height:656px;background:#000;"></div>
<div class="" style="left:419px;top:130px;width:540px;height:652px;background:#655561;"></div>
<div style="left:421px;top:132px;width:22px;height:22px;background-image:conic-gradient(#808080 25%,#c0c0c0 0 50%,#808080 0 75%,#c0c0c0 0);background-size:20px 20px;background-color:#c0c0c0"></div>
<div class="" style="left:443px;top:132px;width:22px;height:22px;background:#ffee00;"></div>
<div class="" style="left:465px;top:132px;width:22px;height:22px;background:#008000;"></div>
<div class="" style="left:487px;top:132px;width:22px;height:22px;background:#0000ff;"></div>
<div class="" style="left:509px;top:132px;width:22px;height:22px;background:#ff0000;"></div>
<div class="" style="left:531px;top:132px;width:22px;height:22px;background:#00ccff;"></div>
<div class="" style="left:553px;top:132px;width:22px;height:22px;background:#fff;"></div>
<svg class="" style="left:553px;top:132px" width="22" height="22" viewBox="0 0 22 22" ><path d="M0 0h12L0 12z" fill="#000"/></svg>
<div class="" style="left:575px;top:132px;width:22px;height:22px;background:#6b1410;"></div>
<div class="" style="left:597px;top:132px;width:22px;height:22px;background:#c44e14;"></div>
<div class="" style="left:619px;top:132px;width:22px;height:22px;background:#ff8c58;"></div>
<div class="" style="left:641px;top:132px;width:22px;height:22px;background:#ffaa82;"></div>
<div class="" style="left:663px;top:132px;width:22px;height:22px;background:#ffc8b0;"></div>
<div class="" style="left:685px;top:132px;width:22px;height:22px;background:#ffffff;"></div>
<div class="" style="left:712px;top:138px;width:2px;height:10px;background:#000;"></div><div class="" style="left:716px;top:138px;width:2px;height:10px;background:#000;"></div>
<div class="" style="left:415px;top:798px;width:548px;height:120px;background:#a8cbe4;"></div>
<div class="" style="left:417px;top:796px;width:544px;height:2px;background:#7b6874;"></div>
<div class="" style="left:417px;top:798px;width:544px;height:118px;background:#000;"></div>
<div style="left:419px;top:800px;width:540px;height:82px;background:linear-gradient(to bottom,rgba(0,0,0,0),#000),linear-gradient(to right,#fff,#f00)"></div>
<div style="left:419px;top:882px;width:540px;height:16px;background:linear-gradient(to right,#f00,#ff0 16.6%,#0f0 33.3%,#0ff 50%,#00f 66.6%,#f0f 83.3%,#f00)"></div>
<div style="left:419px;top:898px;width:540px;height:16px;background:linear-gradient(to right,rgba(255,255,255,0),#fff),conic-gradient(#c0c0c0 25%,#808080 0 50%,#c0c0c0 0 75%,#808080 0) 0 0/32px 16px"></div>
<div style="left:414px;top:925px;width:550px;height:27px;background:#fff;border:2px solid #000;border-radius:6px;box-shadow:inset 0 -2px 0 #c6c6c6"></div>
<div class="t af" style="left:672.4px;top:932px;font-size:13px;color:#000;transform:scaleX(0.8818);transform-origin:0 0;font-weight:bold;-webkit-text-stroke:0">Idx-6</div>
<div style="left:414px;top:958px;width:550px;height:27px;border:2px solid #000;border-radius:6px;background:linear-gradient(#c0c0c0 50%,#808080 0) 0 0/136px 100%,#808080;overflow:hidden"><div style="left:134px;top:0;width:136px;height:12px;background:#808080"></div><div style="left:134px;top:12px;width:136px;height:12px;background:#c0c0c0"></div><div style="left:406px;top:0;width:140px;height:12px;background:#808080"></div><div style="left:406px;top:12px;width:140px;height:12px;background:#c0c0c0"></div><div style="left:270px;top:0;width:136px;height:12px;background:#c0c0c0"></div><div style="left:270px;top:12px;width:136px;height:12px;background:#808080"></div><div style="left:0;top:0;width:134px;height:12px;background:#c0c0c0"></div><div style="left:0;top:12px;width:134px;height:12px;background:#808080"></div></div>
<div class="t af" style="left:672.4px;top:965px;font-size:13px;color:#fff;transform:scaleX(0.8818);transform-origin:0 0;font-weight:bold;-webkit-text-stroke:0">Idx-0</div>
<div class="t af" style="left:444px;top:995px;font-size:15px;color:#2e3338;letter-spacing:-1.087px;">57</div>
<div class="t af" style="left:473px;top:995px;font-size:15px;color:#2e3338;letter-spacing:-1.087px;">28</div>
<div class="t af" style="left:525px;top:995px;font-size:15px;color:#2e3338;letter-spacing:-1.587px;">74</div>
<div class="t af" style="left:553px;top:995px;font-size:15px;color:#2e3338;letter-spacing:-2.087px;">54</div>
<div class="t af" style="left:605px;top:995px;font-size:15px;color:#2e3338;letter-spacing:-1.087px;">28</div>
<div class="t af" style="left:633px;top:995px;font-size:15px;color:#2e3338;transform:scaleX(0.7335);transform-origin:0 0;">14</div>
<svg class="" style="left:420px;top:994px" width="16" height="16" viewBox="0 0 16 16" ><path d="M7 1v12M1 7h12" stroke="#2b2b2b" stroke-width="2"/></svg>
<svg class="" style="left:501px;top:994px" width="16" height="16" viewBox="0 0 16 16" ><path d="M1 1h10v10h-10z" stroke="#2b2b2b" stroke-width="2" fill="none"/><path d="M3 13h10v-10" stroke="#2b2b2b" stroke-width="2" fill="none"/></svg>
<svg class="" style="left:581px;top:994px" width="16" height="16" viewBox="0 0 16 16" ><path d="M1 1h12v12h-12zM7 1v12M1 7h12" stroke="#4b5660" stroke-width="2" fill="none"/></svg>
<div class="ab" style="left:971px;top:88px;width:32px;height:30px;background:#c6c6c6;"></div>
<div class="" style="left:985px;top:100px;width:4px;height:4px;background:#000;"></div>
<div style="left:1015px;top:92px;width:50px;height:24px;background:#fff;border:2px solid #000;border-radius:2px;box-shadow:0 0 0 2px #fff,inset 0 1px 0 #c6c6c6"></div>
<div class="t af" style="left:1019px;top:96px;font-size:16px;color:#000;letter-spacing:0.5px">2<span style="color:#c6c6c6">px</span></div>
<div class="ab" style="left:1077px;top:88px;width:32px;height:30px;background:#c6c6c6;"></div>
<svg class="" style="left:1083px;top:93px" width="18" height="19" viewBox="0 0 18 19" ><path d="M4 1h10v4h-2v3l2 2l3 1l1 2v5.500h-18v-5.500l1-2l3-1l2-2v-3h-2z" fill="#000"/></svg>
<div class="ab" style="left:1117px;top:88px;width:32px;height:30px;background:#c6c6c6;"></div>
<svg class="" style="left:1122px;top:93px" width="24" height="24" viewBox="0 0 24 24" ><circle cx="10" cy="10" r="8" fill="none" stroke="#000" stroke-width="2" stroke-dasharray="4 2"/><circle cx="10" cy="10" r="4.500" fill="none" stroke="#000" stroke-width="2"/><path d="M11 11l9 9" stroke="#000" stroke-width="3.500"/><path d="M13 13l5 5" stroke="#fff" stroke-width="1.500" stroke-dasharray="2 2"/></svg>
<div style="left:1161px;top:96px;width:14px;height:14px;border:2px solid #a08c84;border-radius:2px"></div>
<div class="t af" style="left:1184px;top:99px;font-size:13px;color:#000;transform:scaleX(0.9578);transform-origin:0 0;font-weight:bold;-webkit-text-stroke:0">Pixel-perfect</div>
<div class="" style="left:971px;top:124px;width:912px;height:721px;background:#000;"></div>
<div class="" style="left:973px;top:126px;width:908px;height:718px;background:#fff;"></div>
<div class="" style="left:975px;top:128px;width:904px;height:714px;background:#000;"></div>
<div class="" style="left:977px;top:130px;width:888px;height:698px;background:#655561;"></div>
<div style="left:1867px;top:258px;width:10px;height:452px;background:#7d929e;border-radius:3px"></div>
<div style="left:1208px;top:830px;width:591px;height:10px;background:#7d929e;border-radius:3px"></div>
<div class="" style="left:1073px;top:308px;width:448px;height:328px;background:#000;"></div>
<div class="" style="left:1073px;top:636px;width:448px;height:2px;background:#3f3d2c;"></div>
<div style="left:1075px;top:310px;width:444px;height:324px;background:#fff"></div>
<svg class="px" style="left:1075px;top:310px" width="444" height="324" viewBox="0 0 444 324" ><rect x="180" y="120" width="12" height="12" fill="#6b1410"/><rect x="192" y="120" width="12" height="12" fill="#c44e14"/><rect x="204" y="120" width="12" height="12" fill="#ff8c58"/><rect x="216" y="120" width="12" height="12" fill="#c44e14"/><rect x="228" y="120" width="24" height="12" fill="#6b1410"/><rect x="168" y="132" width="12" height="12" fill="#6b1410"/><rect x="180" y="132" width="12" height="12" fill="#ff8c58"/><rect x="192" y="132" width="36" height="12" fill="#ffc8b0"/><rect x="228" y="132" width="12" height="12" fill="#ff8c58"/><rect x="240" y="132" width="12" height="12" fill="#c44e14"/><rect x="252" y="132" width="12" height="12" fill="#6b1410"/><rect x="168" y="144" width="12" height="12" fill="#c44e14"/><rect x="180" y="144" width="24" height="12" fill="#ffc8b0"/><rect x="204" y="144" width="12" height="12" fill="#ff8c58"/><rect x="216" y="144" width="24" height="12" fill="#ffc8b0"/><rect x="240" y="144" width="12" height="12" fill="#ff8c58"/><rect x="252" y="144" width="12" height="12" fill="#6b1410"/><rect x="168" y="156" width="12" height="12" fill="#c44e14"/><rect x="180" y="156" width="12" height="12" fill="#ffc8b0"/><rect x="192" y="156" width="24" height="12" fill="#ff8c58"/><rect x="216" y="156" width="24" height="12" fill="#ffc8b0"/><rect x="240" y="156" width="12" height="12" fill="#ff8c58"/><rect x="252" y="156" width="12" height="12" fill="#6b1410"/><rect x="168" y="168" width="12" height="12" fill="#c44e14"/><rect x="180" y="168" width="12" height="12" fill="#ffc8b0"/><rect x="192" y="168" width="12" height="12" fill="#c44e14"/><rect x="204" y="168" width="12" height="12" fill="#ffaa82"/><rect x="216" y="168" width="24" height="12" fill="#ffc8b0"/><rect x="240" y="168" width="12" height="12" fill="#c44e14"/><rect x="252" y="168" width="12" height="12" fill="#6b1410"/><rect x="156" y="180" width="12" height="12" fill="#6b1410"/><rect x="168" y="180" width="12" height="12" fill="#ff8c58"/><rect x="180" y="180" width="12" height="12" fill="#ffc8b0"/><rect x="192" y="180" width="12" height="12" fill="#c44e14"/><rect x="204" y="180" width="36" height="12" fill="#ffc8b0"/><rect x="240" y="180" width="12" height="12" fill="#c44e14"/><rect x="252" y="180" width="12" height="12" fill="#6b1410"/><rect x="156" y="192" width="12" height="12" fill="#6b1410"/><rect x="168" y="192" width="24" height="12" fill="#ff8c58"/><rect x="192" y="192" width="12" height="12" fill="#6b1410"/><rect x="204" y="192" width="12" height="12" fill="#ffaa82"/><rect x="216" y="192" width="24" height="12" fill="#ffc8b0"/><rect x="240" y="192" width="12" height="12" fill="#ffaa82"/><rect x="252" y="192" width="12" height="12" fill="#c44e14"/><rect x="264" y="192" width="12" height="12" fill="#6b1410"/><rect x="156" y="204" width="24" height="12" fill="#6b1410"/><rect x="180" y="204" width="24" height="12" fill="#c44e14"/><rect x="204" y="204" width="12" height="12" fill="#ff8c58"/><rect x="216" y="204" width="12" height="12" fill="#ffc8b0"/><rect x="228" y="204" width="12" height="12" fill="#ffaa82"/><rect x="240" y="204" width="12" height="12" fill="#ff8c58"/><rect x="252" y="204" width="12" height="12" fill="#ffc8b0"/><rect x="264" y="204" width="12" height="12" fill="#ff8c58"/><rect x="276" y="204" width="12" height="12" fill="#c44e14"/><rect x="288" y="204" width="12" height="12" fill="#6b1410"/><rect x="132" y="216" width="24" height="12" fill="#6b1410"/><rect x="156" y="216" width="12" height="12" fill="#c44e14"/><rect x="168" y="216" width="12" height="12" fill="#ff8c58"/><rect x="180" y="216" width="60" height="12" fill="#ffc8b0"/><rect x="240" y="216" width="12" height="12" fill="#ffaa82"/><rect x="252" y="216" width="12" height="12" fill="#c44e14"/><rect x="264" y="216" width="12" height="12" fill="#ffc8b0"/><rect x="276" y="216" width="12" height="12" fill="#c44e14"/><rect x="288" y="216" width="12" height="12" fill="#ff8c58"/><rect x="300" y="216" width="24" height="12" fill="#6b1410"/><rect x="108" y="228" width="24" height="12" fill="#6b1410"/><rect x="132" y="228" width="12" height="12" fill="#ff8c58"/><rect x="144" y="228" width="84" height="12" fill="#ffc8b0"/><rect x="228" y="228" width="24" height="12" fill="#ffaa82"/><rect x="252" y="228" width="12" height="12" fill="#c44e14"/><rect x="264" y="228" width="12" height="12" fill="#ffaa82"/><rect x="276" y="228" width="12" height="12" fill="#c44e14"/><rect x="288" y="228" width="12" height="12" fill="#ffaa82"/><rect x="300" y="228" width="12" height="12" fill="#ffc8b0"/><rect x="312" y="228" width="12" height="12" fill="#ff8c58"/><rect x="324" y="228" width="24" height="12" fill="#6b1410"/><rect x="84" y="240" width="12" height="12" fill="#6b1410"/><rect x="96" y="240" width="12" height="12" fill="#c44e14"/><rect x="108" y="240" width="12" height="12" fill="#ff8c58"/><rect x="120" y="240" width="72" height="12" fill="#ffc8b0"/><rect x="192" y="240" width="36" height="12" fill="#ffaa82"/><rect x="228" y="240" width="12" height="12" fill="#ff8c58"/><rect x="240" y="240" width="12" height="12" fill="#c44e14"/><rect x="252" y="240" width="12" height="12" fill="#ff8c58"/><rect x="264" y="240" width="12" height="12" fill="#c44e14"/><rect x="276" y="240" width="12" height="12" fill="#ffaa82"/><rect x="288" y="240" width="48" height="12" fill="#ffc8b0"/><rect x="336" y="240" width="12" height="12" fill="#ff8c58"/><rect x="348" y="240" width="12" height="12" fill="#c44e14"/><rect x="360" y="240" width="12" height="12" fill="#6b1410"/><rect x="60" y="252" width="24" height="12" fill="#6b1410"/><rect x="84" y="252" width="12" height="12" fill="#ff8c58"/><rect x="96" y="252" width="36" height="12" fill="#ffc8b0"/><rect x="132" y="252" width="72" height="12" fill="#ffaa82"/><rect x="204" y="252" width="12" height="12" fill="#ff8c58"/><rect x="216" y="252" width="12" height="12" fill="#c44e14"/><rect x="228" y="252" width="36" height="12" fill="#6b1410"/><rect x="264" y="252" width="12" height="12" fill="#c44e14"/><rect x="276" y="252" width="24" height="12" fill="#ff8c58"/><rect x="300" y="252" width="36" height="12" fill="#ffaa82"/><rect x="336" y="252" width="24" height="12" fill="#ffc8b0"/><rect x="360" y="252" width="12" height="12" fill="#ff8c58"/><rect x="372" y="252" width="12" height="12" fill="#c44e14"/><rect x="384" y="252" width="12" height="12" fill="#6b1410"/><rect x="36" y="264" width="12" height="12" fill="#6b1410"/><rect x="48" y="264" width="12" height="12" fill="#c44e14"/><rect x="60" y="264" width="12" height="12" fill="#ffaa82"/><rect x="72" y="264" width="36" height="12" fill="#ffc8b0"/><rect x="108" y="264" width="12" height="12" fill="#ffaa82"/><rect x="120" y="264" width="12" height="12" fill="#ff8c58"/><rect x="132" y="264" width="12" height="12" fill="#c44e14"/><rect x="144" y="264" width="24" height="12" fill="#6b1410"/><rect x="168" y="264" width="24" height="12" fill="#c44e14"/><rect x="192" y="264" width="24" height="12" fill="#6b1410"/><rect x="228" y="264" width="12" height="12" fill="#6b1410"/><rect x="240" y="264" width="24" height="12" fill="#c44e14"/><rect x="264" y="264" width="36" height="12" fill="#6b1410"/><rect x="300" y="264" width="24" height="12" fill="#c44e14"/><rect x="324" y="264" width="12" height="12" fill="#ff8c58"/><rect x="336" y="264" width="24" height="12" fill="#ffaa82"/><rect x="360" y="264" width="24" height="12" fill="#ffc8b0"/><rect x="384" y="264" width="12" height="12" fill="#ff8c58"/><rect x="396" y="264" width="12" height="12" fill="#6b1410"/><rect x="24" y="276" width="12" height="12" fill="#6b1410"/><rect x="36" y="276" width="12" height="12" fill="#ffaa82"/><rect x="48" y="276" width="24" height="12" fill="#ffc8b0"/><rect x="72" y="276" width="12" height="12" fill="#ffaa82"/><rect x="84" y="276" width="12" height="12" fill="#ff8c58"/><rect x="96" y="276" width="24" height="12" fill="#c44e14"/><rect x="120" y="276" width="24" height="12" fill="#6b1410"/><rect x="156" y="276" width="24" height="12" fill="#c44e14"/><rect x="180" y="276" width="12" height="12" fill="#6b1410"/><rect x="192" y="276" width="12" height="12" fill="#c44e14"/><rect x="228" y="276" width="12" height="12" fill="#c44e14"/><rect x="240" y="276" width="12" height="12" fill="#6b1410"/><rect x="252" y="276" width="24" height="12" fill="#c44e14"/><rect x="324" y="276" width="12" height="12" fill="#6b1410"/><rect x="336" y="276" width="36" height="12" fill="#c44e14"/><rect x="372" y="276" width="12" height="12" fill="#ffaa82"/><rect x="384" y="276" width="24" height="12" fill="#ffc8b0"/><rect x="408" y="276" width="12" height="12" fill="#c44e14"/><rect x="12" y="288" width="12" height="12" fill="#c44e14"/><rect x="24" y="288" width="12" height="12" fill="#ffaa82"/><rect x="36" y="288" width="12" height="12" fill="#ffc8b0"/><rect x="48" y="288" width="36" height="12" fill="#ff8c58"/><rect x="84" y="288" width="12" height="12" fill="#6b1410"/><rect x="360" y="288" width="12" height="12" fill="#6b1410"/><rect x="372" y="288" width="24" height="12" fill="#c44e14"/><rect x="396" y="288" width="12" height="12" fill="#ff8c58"/><rect x="408" y="288" width="12" height="12" fill="#ffaa82"/><rect x="420" y="288" width="12" height="12" fill="#c44e14"/><rect x="24" y="300" width="24" height="12" fill="#c44e14"/><rect x="48" y="300" width="36" height="12" fill="#6b1410"/><rect x="396" y="300" width="24" height="12" fill="#6b1410"/></svg>
<div style="left:1075px;top:310px;width:444px;height:324px;background-image:linear-gradient(to right,rgba(0,0,255,.13) 2px,transparent 2px),linear-gradient(to bottom,rgba(0,0,255,.13) 2px,transparent 2px);background-size:12px 12px;background-position:0 0"></div>
<svg class="" style="left:1410px;top:475px" width="15" height="15" viewBox="0 0 15 15" ><path d="M7.5 0v5M7.5 10v5M0 7.5h5M10 7.5h5" stroke="#000" stroke-width="1.5"/></svg>
<div class="" style="left:1595px;top:130px;width:270px;height:406px;background:#000;"></div>
<div class="" style="left:1597px;top:132px;width:266px;height:402px;background:#d3cbbe;"></div>
<div class="" style="left:1597px;top:132px;width:266px;height:26px;background:#7d929e;"></div>
<div class="" style="left:1597px;top:132px;width:266px;height:2px;background:#a8cbe4;"></div>
<div class="" style="left:1597px;top:132px;width:2px;height:26px;background:#a8cbe4;"></div>
<div class="" style="left:1861px;top:132px;width:2px;height:26px;background:#a8cbe4;"></div>
<div class="" style="left:1597px;top:158px;width:2px;height:374px;background:#fff;"></div>
<div class="" style="left:1597px;top:531px;width:266px;height:3px;background:#8a8478;"></div>
<div class="t af" style="left:1604.6px;top:139px;font-size:16px;color:#fff;letter-spacing:0.02px;">Preview</div>
<div style="left:1801px;top:136px;width:18px;height:20px;background:#7d929e;border:2px solid #000;border-radius:3px;box-shadow:inset 0 -2px 0 #655561"></div>
<div style="left:1821px;top:136px;width:18px;height:20px;background:#c6c6c6;border:2px solid #000;border-radius:3px;box-shadow:inset 0 -2px 0 #655561"></div>
<div style="left:1841px;top:136px;width:18px;height:20px;background:#c6c6c6;border:2px solid #000;border-radius:3px;box-shadow:inset 0 -2px 0 #655561"></div>
<svg class="" style="left:1805px;top:140px" width="10" height="10" viewBox="0 0 10 10" ><path d="M1 4V1h3M6 1h3v3M9 6v3h-3M4 9h-3v-3" stroke="#fff" stroke-width="2" fill="none"/></svg>
<svg class="" style="left:1826px;top:140px" width="10" height="10" viewBox="0 0 10 10" ><path d="M1 0l7 5l-7 5z" fill="#000"/></svg>
<svg class="" style="left:1845px;top:140px" width="10" height="10" viewBox="0 0 10 10" ><path d="M1 1l8 8M9 1l-8 8" stroke="#000" stroke-width="2"/></svg>
<div class="" style="left:1607px;top:164px;width:246px;height:361px;background:#000;"></div>
<div class="" style="left:1609px;top:166px;width:242px;height:357px;background:#fff;"></div>
<div class="" style="left:1611px;top:168px;width:238px;height:353px;background:#000;"></div>
<div class="" style="left:1613px;top:170px;width:234px;height:349px;background:#655561;"></div>
<div class="" style="left:1653px;top:288px;width:152px;height:112px;background:#000;"></div>
<div class="" style="left:1653px;top:400px;width:152px;height:2px;background:#3f3d2c;"></div>
<div class="" style="left:1655px;top:290px;width:148px;height:108px;background:#fff;"></div>
<svg class="px" style="left:1655px;top:290px" width="148" height="108" viewBox="0 0 148 108" ><g transform="scale(0.3333333333333333)"><rect x="180" y="120" width="12" height="12" fill="#6b1410"/><rect x="192" y="120" width="12" height="12" fill="#c44e14"/><rect x="204" y="120" width="12" height="12" fill="#ff8c58"/><rect x="216" y="120" width="12" height="12" fill="#c44e14"/><rect x="228" y="120" width="24" height="12" fill="#6b1410"/><rect x="168" y="132" width="12" height="12" fill="#6b1410"/><rect x="180" y="132" width="12" height="12" fill="#ff8c58"/><rect x="192" y="132" width="36" height="12" fill="#ffc8b0"/><rect x="228" y="132" width="12" height="12" fill="#ff8c58"/><rect x="240" y="132" width="12" height="12" fill="#c44e14"/><rect x="252" y="132" width="12" height="12" fill="#6b1410"/><rect x="168" y="144" width="12" height="12" fill="#c44e14"/><rect x="180" y="144" width="24" height="12" fill="#ffc8b0"/><rect x="204" y="144" width="12" height="12" fill="#ff8c58"/><rect x="216" y="144" width="24" height="12" fill="#ffc8b0"/><rect x="240" y="144" width="12" height="12" fill="#ff8c58"/><rect x="252" y="144" width="12" height="12" fill="#6b1410"/><rect x="168" y="156" width="12" height="12" fill="#c44e14"/><rect x="180" y="156" width="12" height="12" fill="#ffc8b0"/><rect x="192" y="156" width="24" height="12" fill="#ff8c58"/><rect x="216" y="156" width="24" height="12" fill="#ffc8b0"/><rect x="240" y="156" width="12" height="12" fill="#ff8c58"/><rect x="252" y="156" width="12" height="12" fill="#6b1410"/><rect x="168" y="168" width="12" height="12" fill="#c44e14"/><rect x="180" y="168" width="12" height="12" fill="#ffc8b0"/><rect x="192" y="168" width="12" height="12" fill="#c44e14"/><rect x="204" y="168" width="12" height="12" fill="#ffaa82"/><rect x="216" y="168" width="24" height="12" fill="#ffc8b0"/><rect x="240" y="168" width="12" height="12" fill="#c44e14"/><rect x="252" y="168" width="12" height="12" fill="#6b1410"/><rect x="156" y="180" width="12" height="12" fill="#6b1410"/><rect x="168" y="180" width="12" height="12" fill="#ff8c58"/><rect x="180" y="180" width="12" height="12" fill="#ffc8b0"/><rect x="192" y="180" width="12" height="12" fill="#c44e14"/><rect x="204" y="180" width="36" height="12" fill="#ffc8b0"/><rect x="240" y="180" width="12" height="12" fill="#c44e14"/><rect x="252" y="180" width="12" height="12" fill="#6b1410"/><rect x="156" y="192" width="12" height="12" fill="#6b1410"/><rect x="168" y="192" width="24" height="12" fill="#ff8c58"/><rect x="192" y="192" width="12" height="12" fill="#6b1410"/><rect x="204" y="192" width="12" height="12" fill="#ffaa82"/><rect x="216" y="192" width="24" height="12" fill="#ffc8b0"/><rect x="240" y="192" width="12" height="12" fill="#ffaa82"/><rect x="252" y="192" width="12" height="12" fill="#c44e14"/><rect x="264" y="192" width="12" height="12" fill="#6b1410"/><rect x="156" y="204" width="24" height="12" fill="#6b1410"/><rect x="180" y="204" width="24" height="12" fill="#c44e14"/><rect x="204" y="204" width="12" height="12" fill="#ff8c58"/><rect x="216" y="204" width="12" height="12" fill="#ffc8b0"/><rect x="228" y="204" width="12" height="12" fill="#ffaa82"/><rect x="240" y="204" width="12" height="12" fill="#ff8c58"/><rect x="252" y="204" width="12" height="12" fill="#ffc8b0"/><rect x="264" y="204" width="12" height="12" fill="#ff8c58"/><rect x="276" y="204" width="12" height="12" fill="#c44e14"/><rect x="288" y="204" width="12" height="12" fill="#6b1410"/><rect x="132" y="216" width="24" height="12" fill="#6b1410"/><rect x="156" y="216" width="12" height="12" fill="#c44e14"/><rect x="168" y="216" width="12" height="12" fill="#ff8c58"/><rect x="180" y="216" width="60" height="12" fill="#ffc8b0"/><rect x="240" y="216" width="12" height="12" fill="#ffaa82"/><rect x="252" y="216" width="12" height="12" fill="#c44e14"/><rect x="264" y="216" width="12" height="12" fill="#ffc8b0"/><rect x="276" y="216" width="12" height="12" fill="#c44e14"/><rect x="288" y="216" width="12" height="12" fill="#ff8c58"/><rect x="300" y="216" width="24" height="12" fill="#6b1410"/><rect x="108" y="228" width="24" height="12" fill="#6b1410"/><rect x="132" y="228" width="12" height="12" fill="#ff8c58"/><rect x="144" y="228" width="84" height="12" fill="#ffc8b0"/><rect x="228" y="228" width="24" height="12" fill="#ffaa82"/><rect x="252" y="228" width="12" height="12" fill="#c44e14"/><rect x="264" y="228" width="12" height="12" fill="#ffaa82"/><rect x="276" y="228" width="12" height="12" fill="#c44e14"/><rect x="288" y="228" width="12" height="12" fill="#ffaa82"/><rect x="300" y="228" width="12" height="12" fill="#ffc8b0"/><rect x="312" y="228" width="12" height="12" fill="#ff8c58"/><rect x="324" y="228" width="24" height="12" fill="#6b1410"/><rect x="84" y="240" width="12" height="12" fill="#6b1410"/><rect x="96" y="240" width="12" height="12" fill="#c44e14"/><rect x="108" y="240" width="12" height="12" fill="#ff8c58"/><rect x="120" y="240" width="72" height="12" fill="#ffc8b0"/><rect x="192" y="240" width="36" height="12" fill="#ffaa82"/><rect x="228" y="240" width="12" height="12" fill="#ff8c58"/><rect x="240" y="240" width="12" height="12" fill="#c44e14"/><rect x="252" y="240" width="12" height="12" fill="#ff8c58"/><rect x="264" y="240" width="12" height="12" fill="#c44e14"/><rect x="276" y="240" width="12" height="12" fill="#ffaa82"/><rect x="288" y="240" width="48" height="12" fill="#ffc8b0"/><rect x="336" y="240" width="12" height="12" fill="#ff8c58"/><rect x="348" y="240" width="12" height="12" fill="#c44e14"/><rect x="360" y="240" width="12" height="12" fill="#6b1410"/><rect x="60" y="252" width="24" height="12" fill="#6b1410"/><rect x="84" y="252" width="12" height="12" fill="#ff8c58"/><rect x="96" y="252" width="36" height="12" fill="#ffc8b0"/><rect x="132" y="252" width="72" height="12" fill="#ffaa82"/><rect x="204" y="252" width="12" height="12" fill="#ff8c58"/><rect x="216" y="252" width="12" height="12" fill="#c44e14"/><rect x="228" y="252" width="36" height="12" fill="#6b1410"/><rect x="264" y="252" width="12" height="12" fill="#c44e14"/><rect x="276" y="252" width="24" height="12" fill="#ff8c58"/><rect x="300" y="252" width="36" height="12" fill="#ffaa82"/><rect x="336" y="252" width="24" height="12" fill="#ffc8b0"/><rect x="360" y="252" width="12" height="12" fill="#ff8c58"/><rect x="372" y="252" width="12" height="12" fill="#c44e14"/><rect x="384" y="252" width="12" height="12" fill="#6b1410"/><rect x="36" y="264" width="12" height="12" fill="#6b1410"/><rect x="48" y="264" width="12" height="12" fill="#c44e14"/><rect x="60" y="264" width="12" height="12" fill="#ffaa82"/><rect x="72" y="264" width="36" height="12" fill="#ffc8b0"/><rect x="108" y="264" width="12" height="12" fill="#ffaa82"/><rect x="120" y="264" width="12" height="12" fill="#ff8c58"/><rect x="132" y="264" width="12" height="12" fill="#c44e14"/><rect x="144" y="264" width="24" height="12" fill="#6b1410"/><rect x="168" y="264" width="24" height="12" fill="#c44e14"/><rect x="192" y="264" width="24" height="12" fill="#6b1410"/><rect x="228" y="264" width="12" height="12" fill="#6b1410"/><rect x="240" y="264" width="24" height="12" fill="#c44e14"/><rect x="264" y="264" width="36" height="12" fill="#6b1410"/><rect x="300" y="264" width="24" height="12" fill="#c44e14"/><rect x="324" y="264" width="12" height="12" fill="#ff8c58"/><rect x="336" y="264" width="24" height="12" fill="#ffaa82"/><rect x="360" y="264" width="24" height="12" fill="#ffc8b0"/><rect x="384" y="264" width="12" height="12" fill="#ff8c58"/><rect x="396" y="264" width="12" height="12" fill="#6b1410"/><rect x="24" y="276" width="12" height="12" fill="#6b1410"/><rect x="36" y="276" width="12" height="12" fill="#ffaa82"/><rect x="48" y="276" width="24" height="12" fill="#ffc8b0"/><rect x="72" y="276" width="12" height="12" fill="#ffaa82"/><rect x="84" y="276" width="12" height="12" fill="#ff8c58"/><rect x="96" y="276" width="24" height="12" fill="#c44e14"/><rect x="120" y="276" width="24" height="12" fill="#6b1410"/><rect x="156" y="276" width="24" height="12" fill="#c44e14"/><rect x="180" y="276" width="12" height="12" fill="#6b1410"/><rect x="192" y="276" width="12" height="12" fill="#c44e14"/><rect x="228" y="276" width="12" height="12" fill="#c44e14"/><rect x="240" y="276" width="12" height="12" fill="#6b1410"/><rect x="252" y="276" width="24" height="12" fill="#c44e14"/><rect x="324" y="276" width="12" height="12" fill="#6b1410"/><rect x="336" y="276" width="36" height="12" fill="#c44e14"/><rect x="372" y="276" width="12" height="12" fill="#ffaa82"/><rect x="384" y="276" width="24" height="12" fill="#ffc8b0"/><rect x="408" y="276" width="12" height="12" fill="#c44e14"/><rect x="12" y="288" width="12" height="12" fill="#c44e14"/><rect x="24" y="288" width="12" height="12" fill="#ffaa82"/><rect x="36" y="288" width="12" height="12" fill="#ffc8b0"/><rect x="48" y="288" width="36" height="12" fill="#ff8c58"/><rect x="84" y="288" width="12" height="12" fill="#6b1410"/><rect x="360" y="288" width="12" height="12" fill="#6b1410"/><rect x="372" y="288" width="24" height="12" fill="#c44e14"/><rect x="396" y="288" width="12" height="12" fill="#ff8c58"/><rect x="408" y="288" width="12" height="12" fill="#ffaa82"/><rect x="420" y="288" width="12" height="12" fill="#c44e14"/><rect x="24" y="300" width="24" height="12" fill="#c44e14"/><rect x="48" y="300" width="36" height="12" fill="#6b1410"/><rect x="396" y="300" width="24" height="12" fill="#6b1410"/></g></svg>
<div class="ab" style="left:1886px;top:124px;width:30px;height:31px;background:#c6c6c6;border-radius:3px;box-shadow:inset 0 2px 0 #fff,inset 2px 0 0 #fff,inset -2px 0 0 #fff,inset 0 -2px 0 #fff"></div>
<div class="ab" style="left:1886px;top:154px;width:30px;height:31px;background:#fff;border-radius:3px;box-shadow:inset 0 2px 0 #fff,inset 2px 0 0 #fff,inset -2px 0 0 #fff,inset 0 -2px 0 #fff"></div>
<div class="ab" style="left:1886px;top:184px;width:30px;height:31px;background:#c6c6c6;border-radius:3px;box-shadow:inset 0 2px 0 #fff,inset 2px 0 0 #fff,inset -2px 0 0 #fff,inset 0 -2px 0 #fff"></div>
<div class="ab" style="left:1886px;top:215px;width:30px;height:31px;background:#c6c6c6;border-radius:3px;box-shadow:inset 0 2px 0 #fff,inset 2px 0 0 #fff,inset -2px 0 0 #fff,inset 0 -2px 0 #fff"></div>
<div class="ab" style="left:1886px;top:245px;width:30px;height:31px;background:#c6c6c6;border-radius:3px;box-shadow:inset 0 2px 0 #fff,inset 2px 0 0 #fff,inset -2px 0 0 #fff,inset 0 -2px 0 #fff"></div>
<div class="ab" style="left:1886px;top:275px;width:30px;height:31px;background:#c6c6c6;border-radius:3px;box-shadow:inset 0 2px 0 #fff,inset 2px 0 0 #fff,inset -2px 0 0 #fff,inset 0 -2px 0 #fff"></div>
<div class="ab" style="left:1886px;top:305px;width:30px;height:31px;background:#c6c6c6;border-radius:3px;box-shadow:inset 0 2px 0 #fff,inset 2px 0 0 #fff,inset -2px 0 0 #fff,inset 0 -2px 0 #fff"></div>
<div class="ab" style="left:1886px;top:336px;width:30px;height:31px;background:#c6c6c6;border-radius:3px;box-shadow:inset 0 2px 0 #fff,inset 2px 0 0 #fff,inset -2px 0 0 #fff,inset 0 -2px 0 #fff"></div>
<div class="ab" style="left:1886px;top:366px;width:30px;height:31px;background:#c6c6c6;border-radius:3px;box-shadow:inset 0 2px 0 #fff,inset 2px 0 0 #fff,inset -2px 0 0 #fff,inset 0 -2px 0 #fff"></div>
<div class="ab" style="left:1886px;top:396px;width:30px;height:31px;background:#c6c6c6;border-radius:3px;box-shadow:inset 0 2px 0 #fff,inset 2px 0 0 #fff,inset -2px 0 0 #fff,inset 0 -2px 0 #fff"></div>
<div class="ab" style="left:1886px;top:426px;width:30px;height:31px;background:#c6c6c6;border-radius:3px;box-shadow:inset 0 2px 0 #fff,inset 2px 0 0 #fff,inset -2px 0 0 #fff,inset 0 -2px 0 #fff"></div>
<svg class="" style="left:1890px;top:128px" width="22" height="22" viewBox="0 0 22 22" ><rect x="2" y="2" width="18" height="18" fill="none" stroke="#000" stroke-width="2" stroke-dasharray="5 3"/></svg>
<svg class="" style="left:1890px;top:158px" width="22" height="22" viewBox="0 0 22 22" ><path d="M3 19l2-6L15 4l4 4L8 17z" fill="#fff" stroke="#000" stroke-width="2" stroke-linejoin="round"/><path d="M8 15.500l10-8.500" stroke="#8a8a8a" stroke-width="3"/><path d="M6.500 13l9-8" stroke="#000" stroke-width="1"/><path d="M2 20l2.500-7l4.500 4.500z" fill="#000"/></svg>
<svg class="" style="left:1890px;top:188px" width="22" height="22" viewBox="0 0 22 22" ><path d="M2 13l8-7h10l-7 8z" fill="#fff" stroke="#000" stroke-width="2" stroke-linejoin="round"/><path d="M2 13v4h11l7-8v-3l-7 8h-11z" fill="#a8a8a8" stroke="#000" stroke-width="2" stroke-linejoin="round"/></svg>
<svg class="" style="left:1890px;top:219px" width="22" height="22" viewBox="0 0 22 22" ><path d="M3 19l1-4l9-9l3 3l-9 9z" fill="#fff" stroke="#000" stroke-width="2" stroke-linejoin="round"/><path d="M6 15l7-7" stroke="#9a9a9a" stroke-width="2"/><path d="M11 5l6 6" stroke="#000" stroke-width="3.500"/><path d="M14 8l4-4" stroke="#000" stroke-width="5" stroke-linecap="round"/><path d="M2 20l1-3l2 2z" fill="#000"/></svg>
<svg class="" style="left:1890px;top:249px" width="22" height="22" viewBox="0 0 22 22" ><circle cx="9" cy="8" r="7" fill="#dcdcdc" stroke="#000" stroke-width="2"/><path d="M6 9a3.500 3.500 0 0 0 6-1" stroke="#8a8a8a" stroke-width="2" fill="none"/><path d="M14 13l6 6" stroke="#000" stroke-width="5"/><path d="M16.500 15.500l2 2" stroke="#fff" stroke-width="1.500"/></svg>
<svg class="" style="left:1890px;top:279px" width="22" height="22" viewBox="0 0 22 22" ><path d="M11 1v20M1 11h20" stroke="#000" stroke-width="2"/><path d="M11 0l4 4h-8zM11 22l4-4h-8zM0 11l4-4v8zM22 11l-4-4v8z" fill="#000"/></svg>
<svg class="" style="left:1890px;top:309px" width="22" height="22" viewBox="0 0 22 22" ><path d="M11 2c3 4 5 7 5 10a5 5 0 0 1-10 0c0-3 2-6 5-10z" fill="#000"/><path d="M7 19h8" stroke="#555" stroke-width="2"/></svg>
<svg class="" style="left:1890px;top:340px" width="22" height="22" viewBox="0 0 22 22" ><path d="M2 20L20 2" stroke="#000" stroke-width="2"/></svg>
<svg class="" style="left:1890px;top:370px" width="22" height="22" viewBox="0 0 22 22" ><rect x="1" y="3" width="20" height="16" rx="3" fill="#000"/></svg>
<svg class="" style="left:1890px;top:400px" width="22" height="22" viewBox="0 0 22 22" ><path d="M2 16c0-5 5-6 9-6s6-3 5-7c5 2 6 9 3 13s-8 5-12 5s-5-2-5-5z" fill="#000"/></svg>
<svg class="" style="left:1890px;top:430px" width="22" height="22" viewBox="0 0 22 22" ><path d="M2 20l1-4l8-8l3 3l-8 8z" fill="#000"/><path d="M12 8l6-6M15 10l4-4M11 5l3-3" stroke="#999" stroke-width="2" stroke-dasharray="2 2"/></svg>
<div class="ab" style="left:971px;top:852px;width:33px;height:24px;background:#c6c6c6;"></div>
<div class="ab" style="left:1003px;top:852px;width:33px;height:24px;background:#c6c6c6;"></div>
<div class="ab" style="left:1035px;top:852px;width:33px;height:24px;background:#c6c6c6;"></div>
<div class="ab" style="left:1067px;top:852px;width:33px;height:24px;background:#c6c6c6;"></div>
<div class="ab" style="left:1099px;top:852px;width:33px;height:24px;background:#c6c6c6;"></div>
<svg class="" style="left:983px;top:858px" width="12" height="10" viewBox="0 0 12 10" ><rect x="0" y="0" width="2" height="10" fill="#000"/><path d="M10 0v10l-7-5z" fill="#000"/></svg>
<svg class="" style="left:1014px;top:858px" width="12" height="10" viewBox="0 0 12 10" ><path d="M6 0v10l-6-5z" fill="#000"/><rect x="8" y="0" width="2" height="10" fill="#000"/></svg>
<svg class="" style="left:1049px;top:858px" width="12" height="10" viewBox="0 0 12 10" ><path d="M0 0v10l6-5z" fill="#000"/></svg>
<svg class="" style="left:1079px;top:858px" width="12" height="10" viewBox="0 0 12 10" ><rect x="0" y="0" width="2" height="10" fill="#000"/><path d="M4 0v10l6-5z" fill="#000"/></svg>
<svg class="" style="left:1109px;top:858px" width="12" height="10" viewBox="0 0 12 10" ><path d="M0 0v10l6-5z" fill="#000"/><rect x="8" y="0" width="2" height="10" fill="#000"/></svg>
<div class="" style="left:971px;top:882px;width:912px;height:106px;background:#fff;"></div>
<div class="" style="left:973px;top:884px;width:908px;height:102px;background:#c6c6c6;"></div>
<div class="" style="left:973px;top:906px;width:200px;height:2px;background:#fff;"></div>
<div class="" style="left:973px;top:884px;width:22px;height:22px;background:#c6c6c6;"></div>
<div class="" style="left:995px;top:884px;width:2px;height:22px;background:#fff;"></div>
<div class="" style="left:997px;top:884px;width:22px;height:22px;background:#c6c6c6;"></div>
<div class="" style="left:1019px;top:884px;width:2px;height:22px;background:#fff;"></div>
<div class="" style="left:1021px;top:884px;width:22px;height:22px;background:#c6c6c6;"></div>
<div class="" style="left:1043px;top:884px;width:2px;height:22px;background:#fff;"></div>
<div class="" style="left:1045px;top:884px;width:22px;height:22px;background:#c6c6c6;"></div>
<div class="" style="left:1067px;top:884px;width:2px;height:22px;background:#fff;"></div>
<div class="" style="left:1069px;top:884px;width:22px;height:22px;background:#c6c6c6;"></div>
<div class="" style="left:1091px;top:884px;width:2px;height:22px;background:#fff;"></div>
<div class="" style="left:1093px;top:884px;width:78px;height:22px;background:#c6c6c6;"></div>
<div class="" style="left:1173px;top:884px;width:22px;height:22px;background:#7d929e;"></div>
<div class="" style="left:973px;top:930px;width:200px;height:2px;background:#fff;"></div>
<div class="" style="left:973px;top:908px;width:22px;height:22px;background:#7d929e;"></div>
<div class="" style="left:995px;top:908px;width:2px;height:22px;background:#fff;"></div>
<div class="" style="left:997px;top:908px;width:22px;height:22px;background:#7d929e;"></div>
<div class="" style="left:1019px;top:908px;width:2px;height:22px;background:#fff;"></div>
<div class="" style="left:1021px;top:908px;width:22px;height:22px;background:#7d929e;"></div>
<div class="" style="left:1043px;top:908px;width:2px;height:22px;background:#fff;"></div>
<div class="" style="left:1045px;top:908px;width:126px;height:22px;background:#7d929e;"></div>
<div class="" style="left:1173px;top:908px;width:22px;height:22px;background:#7d929e;"></div>
<div class="" style="left:973px;top:954px;width:200px;height:2px;background:#fff;"></div>
<div class="" style="left:973px;top:932px;width:22px;height:22px;background:#c6c6c6;"></div>
<div class="" style="left:995px;top:932px;width:2px;height:22px;background:#fff;"></div>
<div class="" style="left:997px;top:932px;width:22px;height:22px;background:#c6c6c6;"></div>
<div class="" style="left:1019px;top:932px;width:2px;height:22px;background:#fff;"></div>
<div class="" style="left:1021px;top:932px;width:22px;height:22px;background:#c6c6c6;"></div>
<div class="" style="left:1043px;top:932px;width:2px;height:22px;background:#fff;"></div>
<div class="" style="left:1045px;top:932px;width:126px;height:22px;background:#c6c6c6;"></div>
<div class="" style="left:1173px;top:932px;width:22px;height:22px;background:#7d929e;"></div>
<div class="" style="left:973px;top:978px;width:200px;height:2px;background:#fff;"></div>
<div class="" style="left:973px;top:956px;width:22px;height:22px;background:#c6c6c6;"></div>
<div class="" style="left:995px;top:956px;width:2px;height:22px;background:#fff;"></div>
<div class="" style="left:997px;top:956px;width:22px;height:22px;background:#c6c6c6;"></div>
<div class="" style="left:1019px;top:956px;width:2px;height:22px;background:#fff;"></div>
<div class="" style="left:1021px;top:956px;width:22px;height:22px;background:#c6c6c6;"></div>
<div class="" style="left:1043px;top:956px;width:2px;height:22px;background:#fff;"></div>
<div class="" style="left:1045px;top:956px;width:126px;height:22px;background:#c6c6c6;"></div>
<div class="" style="left:1173px;top:956px;width:22px;height:22px;background:#7d929e;"></div>
<div class="" style="left:973px;top:978px;width:224px;height:2px;background:#fff;"></div>
<div class="" style="left:1195px;top:884px;width:2px;height:96px;background:#fff;"></div>
<div class="" style="left:1171px;top:884px;width:2px;height:96px;background:#fff;"></div>
<div class="" style="left:1173px;top:906px;width:22px;height:2px;background:#fff;"></div>
<div class="" style="left:1173px;top:930px;width:22px;height:2px;background:#fff;"></div>
<div class="" style="left:1173px;top:954px;width:22px;height:2px;background:#fff;"></div>
<div class="t af" style="left:1050px;top:911px;font-size:16px;color:#fff;letter-spacing:-0.127px;">sprite</div>
<div class="t af" style="left:1050px;top:935px;font-size:16px;color:#000;letter-spacing:-0.965px;">REF</div>
<div class="t af" style="left:1050px;top:959px;font-size:16px;color:#000;letter-spacing:0.116px;">Background</div>
<div class="" style="left:1050px;top:974px;width:98px;height:2px;background:#000;"></div>
<div class="t" style="left:1179.5px;top:889px;font-size:13px;color:#fff;font-family:'Liberation Sans',sans-serif;font-weight:bold">1</div>
<div class="" style="left:1167px;top:902px;width:32px;height:32px;background:#3c4853;border-radius:2px"></div>
<div class="" style="left:1169px;top:904px;width:28px;height:28px;background:#f4f4b4;"></div>
<div class="" style="left:1171px;top:906px;width:24px;height:24px;background:#808080;"></div>
<div class="" style="left:1173px;top:908px;width:22px;height:22px;background:#6b1022;box-shadow:inset -2px -2px 0 #3a0008"></div>
<div style="left:1177px;top:912px;width:14px;height:14px;background:#fff;border-radius:7px"></div>
<div style="left:1177px;top:936px;width:14px;height:14px;background:#fff;border-radius:7px"></div>
<div style="left:1177px;top:960px;width:14px;height:14px;background:#fff;border-radius:7px"></div>
<svg class="" style="left:975px;top:890px" width="16" height="12" viewBox="0 0 16 12" ><ellipse cx="8" cy="6.500" rx="7" ry="4.500" fill="none" stroke="#000" stroke-width="2"/><ellipse cx="8" cy="4.500" rx="5" ry="3.500" fill="#000"/><rect x="7" y="2" width="2" height="2" fill="#fff"/></svg>
<svg class="" style="left:1001px;top:886px" width="12" height="16" viewBox="0 0 12 16" ><path d="M3.500 6V3.500a2 2 0 0 1 2-2h3a1.500 1.500 0 0 1 1.500 1.500v1" stroke="#000" stroke-width="2" fill="none"/><rect x="0" y="6" width="12" height="8.300" fill="#000"/><rect x="0" y="14.300" width="12" height="1.400" fill="#6e7a82"/><rect x="5" y="8" width="2" height="4" fill="#808080"/></svg>
<svg class="" style="left:1023px;top:890px" width="18" height="10" viewBox="0 0 18 10" ><circle cx="4" cy="4" r="4" fill="#000"/><circle cx="14" cy="4" r="4" fill="#000"/><rect x="2" y="8" width="4" height="1.400" fill="#7d868c"/><rect x="12" y="8" width="4" height="1.400" fill="#7d868c"/></svg>
<svg class="" style="left:1049px;top:886px" width="14" height="18" viewBox="0 0 14 18" ><path d="M0 3h14M0 9h14M0 15h14" stroke="#808080" stroke-width="2"/><rect x="8" y="0" width="4" height="6" fill="#000"/><rect x="2" y="6" width="4" height="6" fill="#000"/><rect x="6" y="12" width="4" height="6" fill="#000"/></svg>
<svg class="" style="left:1073px;top:888px" width="14" height="14" viewBox="0 0 14 14" ><rect x="5" y="5" width="8" height="8" fill="none" stroke="#808080" stroke-width="2"/><rect x="1" y="1" width="8" height="8" fill="#c6c6c6" stroke="#000" stroke-width="2"/></svg>
<svg class="" style="left:975px;top:914px" width="16" height="12" viewBox="0 0 16 12" ><ellipse cx="8" cy="6.500" rx="7" ry="4.500" fill="none" stroke="#fff" stroke-width="2"/><ellipse cx="8" cy="4.500" rx="5" ry="3.500" fill="#fff"/><rect x="7" y="2" width="2" height="2" fill="#7d929e"/></svg>
<svg class="" style="left:1001px;top:910px" width="12" height="16" viewBox="0 0 12 16" ><path d="M3.500 6V3.500a2 2 0 0 1 2-2h3a1.500 1.500 0 0 1 1.500 1.500v1" stroke="#fff" stroke-width="2" fill="none"/><rect x="0" y="6" width="12" height="8.300" fill="#fff"/><rect x="0" y="14.300" width="12" height="1.400" fill="#6e7a82"/><rect x="5" y="8" width="2" height="4" fill="#7d929e"/></svg>
<svg class="" style="left:1023px;top:914px" width="18" height="10" viewBox="0 0 18 10" ><circle cx="4" cy="4" r="4" fill="#fff"/><circle cx="14" cy="4" r="4" fill="#fff"/><rect x="2" y="8" width="4" height="1.400" fill="#7d868c"/><rect x="12" y="8" width="4" height="1.400" fill="#7d868c"/></svg>
<svg class="" style="left:975px;top:941px" width="16" height="8" viewBox="0 0 16 8" ><path d="M1 1q7 9 14 0" stroke="#000" stroke-width="2" fill="none"/></svg>
<svg class="" style="left:1001px;top:934px" width="12" height="16" viewBox="0 0 12 16" ><path d="M3 6V4a3 3 0 0 1 6 0v2" stroke="#000" stroke-width="2" fill="none"/><rect x="0" y="6" width="12" height="8.300" fill="#000"/><rect x="0" y="14.300" width="12" height="1.400" fill="#6e7a82"/><rect x="5" y="8" width="2" height="4" fill="#808080"/></svg>
<svg class="" style="left:1023px;top:938px" width="18" height="10" viewBox="0 0 18 10" ><circle cx="4" cy="4" r="4" fill="#000"/><circle cx="14" cy="4" r="4" fill="#000"/><rect x="2" y="8" width="4" height="1.400" fill="#7d868c"/><rect x="12" y="8" width="4" height="1.400" fill="#7d868c"/></svg>
<svg class="" style="left:975px;top:962px" width="16" height="12" viewBox="0 0 16 12" ><ellipse cx="8" cy="6.500" rx="7" ry="4.500" fill="none" stroke="#000" stroke-width="2"/><ellipse cx="8" cy="4.500" rx="5" ry="3.500" fill="#000"/><rect x="7" y="2" width="2" height="2" fill="#fff"/></svg>
<svg class="" style="left:1001px;top:958px" width="12" height="16" viewBox="0 0 12 16" ><path d="M3 6V4a3 3 0 0 1 6 0v2" stroke="#000" stroke-width="2" fill="none"/><rect x="0" y="6" width="12" height="8.300" fill="#000"/><rect x="0" y="14.300" width="12" height="1.400" fill="#6e7a82"/><rect x="5" y="8" width="2" height="4" fill="#808080"/></svg>
<svg class="" style="left:1023px;top:962px" width="18" height="10" viewBox="0 0 18 10" ><circle cx="4" cy="4" r="4" fill="#000"/><circle cx="14" cy="4" r="4" fill="#000"/><rect x="2" y="8" width="4" height="1.400" fill="#7d868c"/><rect x="12" y="8" width="4" height="1.400" fill="#7d868c"/></svg>
<div style="left:1873px;top:907px;width:7px;height:40px;background:#8c8c8c;border-radius:2px"></div>
<div class="" style="left:1691px;top:946px;width:191px;height:42px;background:#000;"></div>
<div class="" style="left:1693px;top:948px;width:187px;height:34px;background:#fff;"></div>
<div class="" style="left:1693px;top:982px;width:187px;height:4px;background:#9c8279;"></div>
<div style="left:1695px;top:950px;width:183px;height:32px;background:#c6c6c6;border:2px solid #000;border-radius:5px;box-shadow:inset 0 2px 0 #fff,inset 0 -2px 0 #fff"></div>
<div class="t af" style="left:1702px;top:957px;font-size:16px;color:#000;letter-spacing:0.131px;">Disable Snap to Grid</div>
<div style="left:1886px;top:953px;width:30px;height:32px;background:#fff;border:2px solid #000;border-radius:3px;box-shadow:inset 0 -2px 0 #c6c6c6"></div>
<div style="left:1889px;top:958px;width:24px;height:22px;border:2px solid #000"></div>
<div class="t af" style="left:1893px;top:963px;font-size:13px;color:#000;transform:scaleX(0.7042);transform-origin:0 0;font-weight:bold;-webkit-text-stroke:0">1:1</div>
<div class="t af" style="left:1638px;top:994px;font-size:16px;color:#000;letter-spacing:0.351px;">Frame:</div>
<div style="left:1713px;top:992px;width:64px;height:19px;background:#fff;border:2px solid #000;border-radius:2px;box-shadow:inset 0 1px 0 #c6c6c6"></div>
<div class="t af" style="left:1717px;top:994px;font-size:15px;color:#000;">1</div>
<div class="ab" style="left:1789px;top:991px;width:23px;height:22px;background:#c6c6c6;"></div>
<svg class="" style="left:1794px;top:995px" width="13" height="13" viewBox="0 0 13 13" ><path d="M6.5 1v11M1 6.5h11" stroke="#000" stroke-width="2"/></svg>
<div style="left:1825px;top:992px;width:73px;height:19px;background:#fff;border:2px solid #000;border-radius:2px;box-shadow:inset 0 1px 0 #c6c6c6"></div>
<div class="t af" style="left:1828px;top:994px;font-size:15px;color:#000;letter-spacing:-0.086px;">300.0</div>
<div class="t af" style="left:1872.5px;top:997px;font-size:11px;color:#c6c6c6;">%</div>
</div><!-- psdoc -->
<div id="psdoc" class="a">
<div class="" style="left:10px;top:756px;width:270px;height:249px;background:#3a3a3a;border-radius:5px 5px 0 0"></div>
<div class="" style="left:11px;top:757px;width:268px;height:247px;background:#535353;border-radius:4px 4px 0 0"></div>
<div style="left:17px;top:761px;width:13px;height:15px;background:#0a2a3c;border:1.5px solid #31c5f0;border-radius:1px"></div>
<div class="t" style="left:19px;top:765px;font-size:7.5px;color:#31c5f0;font-family:'Liberation Sans',sans-serif;font-weight:bold;letter-spacing:-0.3px">Ps</div>
<div class="t" style="left:34.9px;top:763px;font-size:12px;color:#9d9d9d;letter-spacing:-0.209px;font-family:'Liberation Sans',sans-serif;-webkit-text-stroke:0.3px #9d9d9d;">attempt-1.png @ 700%...</div>
<div style="left:171px;top:756px;width:103px;height:21px;background:#585858;border:1px solid #454545;border-radius:0 0 3px 3px"></div>
<div class="" style="left:199px;top:757px;width:1px;height:19px;background:#454545;"></div>
<div class="" style="left:227px;top:757px;width:1px;height:19px;background:#454545;"></div>
<div class="" style="left:180px;top:767px;width:10px;height:3px;background:#a0a0a0;"></div>
<div style="left:208px;top:762px;width:10px;height:8px;border:2px solid #a0a0a0"></div>
<svg style="left:244px;top:761px" width="11" height="10" viewBox="0 0 11 10" ><path d="M1 1l9 8M10 1l-9 8" stroke="#a8a8a8" stroke-width="2"/></svg>
<div class="" style="left:14px;top:780px;width:263px;height:204px;background:#3e3e3e;"></div>
<div class="" style="left:15px;top:781px;width:261px;height:203px;background:#4a4a4a;"></div>
<div style="left:15px;top:781px;width:245px;height:203px;background:conic-gradient(#666 25%,#999 0 50%,#666 0 75%,#999 0) 0 0/112px 112px"></div>
<svg style="left:15px;top:781px" width="245" height="203" viewBox="0 0 245 203" shape-rendering="crispEdges"><g id="spr1"><rect x="133" y="0" width="14" height="7" fill="#2e1634"/><rect x="70" y="7" width="28" height="7" fill="#2e1634"/><rect x="126" y="7" width="7" height="7" fill="#2e1634"/><rect x="133" y="7" width="14" height="7" fill="#fff544"/><rect x="147" y="7" width="7" height="7" fill="#2e1634"/><rect x="63" y="14" width="7" height="7" fill="#2e1634"/><rect x="70" y="14" width="14" height="7" fill="#fff544"/><rect x="84" y="14" width="7" height="7" fill="#ffa830"/><rect x="91" y="14" width="35" height="7" fill="#2e1634"/><rect x="126" y="14" width="7" height="7" fill="#ffffff"/><rect x="133" y="14" width="7" height="7" fill="#ff7010"/><rect x="140" y="14" width="14" height="7" fill="#fff544"/><rect x="154" y="14" width="7" height="7" fill="#2e1634"/><rect x="56" y="21" width="14" height="7" fill="#2e1634"/><rect x="70" y="21" width="7" height="7" fill="#ffa830"/><rect x="77" y="21" width="7" height="7" fill="#7e1800"/><rect x="84" y="21" width="7" height="7" fill="#2e1634"/><rect x="91" y="21" width="7" height="7" fill="#ff7010"/><rect x="98" y="21" width="21" height="7" fill="#fff544"/><rect x="119" y="21" width="7" height="7" fill="#ff7010"/><rect x="126" y="21" width="7" height="7" fill="#fff544"/><rect x="133" y="21" width="7" height="7" fill="#ff7010"/><rect x="140" y="21" width="7" height="7" fill="#ffa830"/><rect x="147" y="21" width="7" height="7" fill="#ff7010"/><rect x="154" y="21" width="7" height="7" fill="#2e1634"/><rect x="56" y="28" width="7" height="7" fill="#2e1634"/><rect x="70" y="28" width="7" height="7" fill="#2e1634"/><rect x="77" y="28" width="7" height="7" fill="#ff7010"/><rect x="84" y="28" width="7" height="7" fill="#7e1800"/><rect x="91" y="28" width="7" height="7" fill="#ffa830"/><rect x="98" y="28" width="28" height="7" fill="#fff544"/><rect x="126" y="28" width="7" height="7" fill="#ff7010"/><rect x="133" y="28" width="7" height="7" fill="#7e1800"/><rect x="140" y="28" width="7" height="7" fill="#ff7010"/><rect x="147" y="28" width="7" height="7" fill="#ffa830"/><rect x="154" y="28" width="7" height="7" fill="#ff7010"/><rect x="161" y="28" width="7" height="7" fill="#2e1634"/><rect x="70" y="35" width="7" height="7" fill="#2e1634"/><rect x="77" y="35" width="7" height="7" fill="#ffa830"/><rect x="84" y="35" width="7" height="7" fill="#fff544"/><rect x="91" y="35" width="7" height="7" fill="#ff7010"/><rect x="98" y="35" width="7" height="7" fill="#ffa830"/><rect x="105" y="35" width="14" height="7" fill="#fff544"/><rect x="119" y="35" width="14" height="7" fill="#ffa830"/><rect x="133" y="35" width="7" height="7" fill="#ff7010"/><rect x="140" y="35" width="7" height="7" fill="#7e1800"/><rect x="147" y="35" width="7" height="7" fill="#ff7010"/><rect x="154" y="35" width="7" height="7" fill="#ffa830"/><rect x="161" y="35" width="7" height="7" fill="#2e1634"/><rect x="70" y="42" width="7" height="7" fill="#2e1634"/><rect x="77" y="42" width="7" height="7" fill="#7e1800"/><rect x="84" y="42" width="7" height="7" fill="#ffa830"/><rect x="91" y="42" width="7" height="7" fill="#fff544"/><rect x="98" y="42" width="7" height="7" fill="#7e1800"/><rect x="105" y="42" width="21" height="7" fill="#ffa830"/><rect x="126" y="42" width="7" height="7" fill="#fff544"/><rect x="133" y="42" width="7" height="7" fill="#ff7010"/><rect x="140" y="42" width="7" height="7" fill="#7e1800"/><rect x="147" y="42" width="7" height="7" fill="#ff7010"/><rect x="154" y="42" width="7" height="7" fill="#ffa830"/><rect x="161" y="42" width="7" height="7" fill="#2e1634"/><rect x="70" y="49" width="7" height="7" fill="#2e1634"/><rect x="77" y="49" width="7" height="7" fill="#f8a8a8"/><rect x="84" y="49" width="7" height="7" fill="#7e1800"/><rect x="91" y="49" width="7" height="7" fill="#ffa830"/><rect x="98" y="49" width="7" height="7" fill="#7e1800"/><rect x="105" y="49" width="7" height="7" fill="#ffa830"/><rect x="112" y="49" width="7" height="7" fill="#fff544"/><rect x="119" y="49" width="7" height="7" fill="#ffa830"/><rect x="126" y="49" width="14" height="7" fill="#ff7010"/><rect x="140" y="49" width="7" height="7" fill="#7e1800"/><rect x="147" y="49" width="14" height="7" fill="#ff7010"/><rect x="161" y="49" width="7" height="7" fill="#2e1634"/><rect x="70" y="56" width="7" height="7" fill="#2e1634"/><rect x="77" y="56" width="7" height="7" fill="#f8d8d8"/><rect x="84" y="56" width="7" height="7" fill="#f8a8a8"/><rect x="91" y="56" width="14" height="7" fill="#7e1800"/><rect x="105" y="56" width="7" height="7" fill="#ff7010"/><rect x="112" y="56" width="7" height="7" fill="#7e1800"/><rect x="119" y="56" width="7" height="7" fill="#ffa830"/><rect x="126" y="56" width="7" height="7" fill="#ff7010"/><rect x="133" y="56" width="7" height="7" fill="#7e1800"/><rect x="140" y="56" width="21" height="7" fill="#ff7010"/><rect x="161" y="56" width="7" height="7" fill="#2e1634"/><rect x="70" y="63" width="7" height="7" fill="#2e1634"/><rect x="77" y="63" width="7" height="7" fill="#f8a8a8"/><rect x="84" y="63" width="14" height="7" fill="#185848"/><rect x="98" y="63" width="7" height="7" fill="#f8a8a8"/><rect x="105" y="63" width="7" height="7" fill="#7e1800"/><rect x="112" y="63" width="7" height="7" fill="#f8d8d8"/><rect x="119" y="63" width="7" height="7" fill="#7e1800"/><rect x="126" y="63" width="7" height="7" fill="#ff7010"/><rect x="133" y="63" width="7" height="7" fill="#7e1800"/><rect x="140" y="63" width="21" height="7" fill="#ff7010"/><rect x="161" y="63" width="7" height="7" fill="#2e1634"/><rect x="70" y="70" width="7" height="7" fill="#2e1634"/><rect x="77" y="70" width="7" height="7" fill="#f8d8d8"/><rect x="84" y="70" width="7" height="7" fill="#185848"/><rect x="91" y="70" width="7" height="7" fill="#ffffff"/><rect x="98" y="70" width="7" height="7" fill="#f8a8a8"/><rect x="105" y="70" width="7" height="7" fill="#f8d8d8"/><rect x="112" y="70" width="7" height="7" fill="#f8a8a8"/><rect x="119" y="70" width="7" height="7" fill="#7e1800"/><rect x="126" y="70" width="7" height="7" fill="#2e1634"/><rect x="133" y="70" width="21" height="7" fill="#ff7010"/><rect x="154" y="70" width="7" height="7" fill="#2e1634"/><rect x="70" y="77" width="7" height="7" fill="#2e1634"/><rect x="77" y="77" width="7" height="7" fill="#f8a8a8"/><rect x="84" y="77" width="14" height="7" fill="#f8d8d8"/><rect x="98" y="77" width="7" height="7" fill="#5e1c18"/><rect x="105" y="77" width="14" height="7" fill="#7e1800"/><rect x="119" y="77" width="7" height="7" fill="#2e1634"/><rect x="126" y="77" width="7" height="7" fill="#7e1800"/><rect x="133" y="77" width="21" height="7" fill="#ff7010"/><rect x="154" y="77" width="7" height="7" fill="#2e1634"/><rect x="77" y="84" width="7" height="7" fill="#2e1634"/><rect x="84" y="84" width="7" height="7" fill="#ff7010"/><rect x="91" y="84" width="7" height="7" fill="#5e1c18"/><rect x="98" y="84" width="7" height="7" fill="#ff9460"/><rect x="105" y="84" width="7" height="7" fill="#ffb088"/><rect x="112" y="84" width="7" height="7" fill="#a4541c"/><rect x="119" y="84" width="14" height="7" fill="#5e1c18"/><rect x="133" y="84" width="7" height="7" fill="#a4541c"/><rect x="140" y="84" width="7" height="7" fill="#5e1c18"/><rect x="147" y="84" width="7" height="7" fill="#ff7010"/><rect x="154" y="84" width="7" height="7" fill="#2e1634"/><rect x="84" y="91" width="7" height="7" fill="#2e1634"/><rect x="91" y="91" width="7" height="7" fill="#a4541c"/><rect x="98" y="91" width="7" height="7" fill="#ffc8ac"/><rect x="105" y="91" width="7" height="7" fill="#ff9460"/><rect x="112" y="91" width="7" height="7" fill="#ffc8ac"/><rect x="119" y="91" width="7" height="7" fill="#ffb088"/><rect x="126" y="91" width="14" height="7" fill="#ff9460"/><rect x="140" y="91" width="7" height="7" fill="#5e1c18"/><rect x="147" y="91" width="7" height="7" fill="#2e1634"/><rect x="84" y="98" width="7" height="7" fill="#5e1c18"/><rect x="91" y="98" width="7" height="7" fill="#a4541c"/><rect x="98" y="98" width="14" height="7" fill="#ffc8ac"/><rect x="112" y="98" width="7" height="7" fill="#a4541c"/><rect x="119" y="98" width="7" height="7" fill="#ffc8ac"/><rect x="126" y="98" width="7" height="7" fill="#ffb088"/><rect x="133" y="98" width="7" height="7" fill="#a4541c"/><rect x="140" y="98" width="7" height="7" fill="#2e1634"/><rect x="84" y="105" width="7" height="7" fill="#a4541c"/><rect x="91" y="105" width="7" height="7" fill="#5e1c18"/><rect x="98" y="105" width="7" height="7" fill="#ffb088"/><rect x="105" y="105" width="7" height="7" fill="#ffc8ac"/><rect x="112" y="105" width="7" height="7" fill="#5e1c18"/><rect x="119" y="105" width="7" height="7" fill="#ffb088"/><rect x="126" y="105" width="7" height="7" fill="#ffc8ac"/><rect x="133" y="105" width="7" height="7" fill="#a4541c"/><rect x="84" y="112" width="7" height="7" fill="#a4541c"/><rect x="91" y="112" width="7" height="7" fill="#5e1c18"/><rect x="98" y="112" width="7" height="7" fill="#ff9460"/><rect x="105" y="112" width="7" height="7" fill="#ffb088"/><rect x="112" y="112" width="7" height="7" fill="#5e1c18"/><rect x="119" y="112" width="14" height="7" fill="#a4541c"/><rect x="133" y="112" width="7" height="7" fill="#ffb088"/><rect x="140" y="112" width="7" height="7" fill="#a4541c"/><rect x="147" y="112" width="14" height="7" fill="#5e1c18"/><rect x="98" y="119" width="7" height="7" fill="#a4541c"/><rect x="105" y="119" width="7" height="7" fill="#ff9460"/><rect x="112" y="119" width="7" height="7" fill="#a4541c"/><rect x="119" y="119" width="14" height="7" fill="#ffb088"/><rect x="133" y="119" width="14" height="7" fill="#a4541c"/><rect x="147" y="119" width="7" height="7" fill="#ffc8ac"/><rect x="154" y="119" width="7" height="7" fill="#ffb088"/><rect x="161" y="119" width="7" height="7" fill="#5e1c18"/><rect x="98" y="126" width="7" height="7" fill="#a4541c"/><rect x="105" y="126" width="7" height="7" fill="#ff9460"/><rect x="112" y="126" width="28" height="7" fill="#ffc8ac"/><rect x="140" y="126" width="7" height="7" fill="#ffb088"/><rect x="147" y="126" width="14" height="7" fill="#ffc8ac"/><rect x="161" y="126" width="7" height="7" fill="#ffb088"/><rect x="168" y="126" width="7" height="7" fill="#5e1c18"/><rect x="84" y="133" width="7" height="7" fill="#5e1c18"/><rect x="91" y="133" width="7" height="7" fill="#a4541c"/><rect x="98" y="133" width="42" height="7" fill="#ffc8ac"/><rect x="140" y="133" width="7" height="7" fill="#ffb088"/><rect x="147" y="133" width="14" height="7" fill="#ffc8ac"/><rect x="161" y="133" width="7" height="7" fill="#ffb088"/><rect x="168" y="133" width="7" height="7" fill="#a4541c"/><rect x="175" y="133" width="7" height="7" fill="#5e1c18"/><rect x="70" y="140" width="14" height="7" fill="#5e1c18"/><rect x="84" y="140" width="7" height="7" fill="#ffb088"/><rect x="91" y="140" width="70" height="7" fill="#ffc8ac"/><rect x="161" y="140" width="7" height="7" fill="#ffb088"/><rect x="168" y="140" width="14" height="7" fill="#ff9460"/><rect x="182" y="140" width="7" height="7" fill="#5e1c18"/><rect x="63" y="147" width="7" height="7" fill="#5e1c18"/><rect x="70" y="147" width="7" height="7" fill="#ff9460"/><rect x="77" y="147" width="42" height="7" fill="#ffc8ac"/><rect x="119" y="147" width="7" height="7" fill="#ffb088"/><rect x="126" y="147" width="7" height="7" fill="#ff9460"/><rect x="133" y="147" width="7" height="7" fill="#ffb088"/><rect x="140" y="147" width="7" height="7" fill="#ff9460"/><rect x="147" y="147" width="7" height="7" fill="#ffb088"/><rect x="154" y="147" width="14" height="7" fill="#ff9460"/><rect x="168" y="147" width="14" height="7" fill="#ffc8ac"/><rect x="182" y="147" width="7" height="7" fill="#ff9460"/><rect x="189" y="147" width="7" height="7" fill="#5e1c18"/><rect x="49" y="154" width="14" height="7" fill="#5e1c18"/><rect x="63" y="154" width="35" height="7" fill="#ffc8ac"/><rect x="98" y="154" width="7" height="7" fill="#ffb088"/><rect x="105" y="154" width="7" height="7" fill="#ff9460"/><rect x="112" y="154" width="7" height="7" fill="#a4541c"/><rect x="119" y="154" width="7" height="7" fill="#5e1c18"/><rect x="126" y="154" width="7" height="7" fill="#a4541c"/><rect x="133" y="154" width="28" height="7" fill="#5e1c18"/><rect x="161" y="154" width="7" height="7" fill="#ff9460"/><rect x="168" y="154" width="7" height="7" fill="#ffb088"/><rect x="175" y="154" width="14" height="7" fill="#ffc8ac"/><rect x="189" y="154" width="7" height="7" fill="#ff9460"/><rect x="196" y="154" width="7" height="7" fill="#5e1c18"/><rect x="42" y="161" width="7" height="7" fill="#5e1c18"/><rect x="49" y="161" width="7" height="7" fill="#ff9460"/><rect x="56" y="161" width="14" height="7" fill="#ffc8ac"/><rect x="70" y="161" width="7" height="7" fill="#ff9460"/><rect x="77" y="161" width="14" height="7" fill="#a4541c"/><rect x="91" y="161" width="21" height="7" fill="#5e1c18"/><rect x="112" y="161" width="7" height="7" fill="#ff9460"/><rect x="133" y="161" width="7" height="7" fill="#a4541c"/><rect x="140" y="161" width="7" height="7" fill="#ff9460"/><rect x="147" y="161" width="21" height="7" fill="#5e1c18"/><rect x="168" y="161" width="7" height="7" fill="#a4541c"/><rect x="175" y="161" width="7" height="7" fill="#ffc8ac"/><rect x="182" y="161" width="7" height="7" fill="#ff9460"/><rect x="189" y="161" width="7" height="7" fill="#ffc8ac"/><rect x="196" y="161" width="7" height="7" fill="#ff9460"/><rect x="203" y="161" width="7" height="7" fill="#5e1c18"/><rect x="28" y="168" width="14" height="7" fill="#5e1c18"/><rect x="42" y="168" width="7" height="7" fill="#ffb088"/><rect x="49" y="168" width="14" height="7" fill="#ffc8ac"/><rect x="63" y="168" width="7" height="7" fill="#ff9460"/><rect x="70" y="168" width="7" height="7" fill="#5e1c18"/><rect x="98" y="168" width="7" height="7" fill="#a4541c"/><rect x="105" y="168" width="7" height="7" fill="#ffc8ac"/><rect x="112" y="168" width="7" height="7" fill="#ff9460"/><rect x="119" y="168" width="14" height="7" fill="#5e1c18"/><rect x="133" y="168" width="7" height="7" fill="#ff9460"/><rect x="140" y="168" width="7" height="7" fill="#a4541c"/><rect x="147" y="168" width="7" height="7" fill="#ffc8ac"/><rect x="154" y="168" width="7" height="7" fill="#ff9460"/><rect x="161" y="168" width="7" height="7" fill="#5e1c18"/><rect x="182" y="168" width="7" height="7" fill="#a4541c"/><rect x="189" y="168" width="14" height="7" fill="#ffc8ac"/><rect x="203" y="168" width="7" height="7" fill="#ff9460"/><rect x="210" y="168" width="7" height="7" fill="#5e1c18"/><rect x="21" y="175" width="7" height="7" fill="#5e1c18"/><rect x="28" y="175" width="7" height="7" fill="#ff9460"/><rect x="35" y="175" width="14" height="7" fill="#ffc8ac"/><rect x="49" y="175" width="7" height="7" fill="#ffb088"/><rect x="56" y="175" width="7" height="7" fill="#a4541c"/><rect x="63" y="175" width="7" height="7" fill="#5e1c18"/><rect x="91" y="175" width="7" height="7" fill="#a4541c"/><rect x="98" y="175" width="7" height="7" fill="#ffc8ac"/><rect x="105" y="175" width="7" height="7" fill="#ff9460"/><rect x="112" y="175" width="7" height="7" fill="#a4541c"/><rect x="119" y="175" width="7" height="7" fill="#ff9460"/><rect x="126" y="175" width="14" height="7" fill="#5e1c18"/><rect x="147" y="175" width="7" height="7" fill="#5e1c18"/><rect x="154" y="175" width="14" height="7" fill="#a4541c"/><rect x="182" y="175" width="7" height="7" fill="#5e1c18"/><rect x="189" y="175" width="7" height="7" fill="#ff9460"/><rect x="196" y="175" width="14" height="7" fill="#ffc8ac"/><rect x="210" y="175" width="7" height="7" fill="#ff9460"/><rect x="217" y="175" width="7" height="7" fill="#5e1c18"/><rect x="7" y="182" width="14" height="7" fill="#5e1c18"/><rect x="21" y="182" width="14" height="7" fill="#ffc8ac"/><rect x="35" y="182" width="7" height="7" fill="#ff9460"/><rect x="42" y="182" width="14" height="7" fill="#5e1c18"/><rect x="84" y="182" width="14" height="7" fill="#a4541c"/><rect x="98" y="182" width="14" height="7" fill="#5e1c18"/><rect x="119" y="182" width="14" height="7" fill="#5e1c18"/><rect x="189" y="182" width="7" height="7" fill="#5e1c18"/><rect x="196" y="182" width="7" height="7" fill="#a4541c"/><rect x="203" y="182" width="7" height="7" fill="#ffc8ac"/><rect x="210" y="182" width="7" height="7" fill="#ff9460"/><rect x="217" y="182" width="7" height="7" fill="#ffc8ac"/><rect x="224" y="182" width="7" height="7" fill="#ff9460"/><rect x="231" y="182" width="7" height="7" fill="#5e1c18"/><rect x="0" y="189" width="7" height="7" fill="#5e1c18"/><rect x="7" y="189" width="7" height="7" fill="#ff9460"/><rect x="14" y="189" width="7" height="7" fill="#ffc8ac"/><rect x="21" y="189" width="14" height="7" fill="#ffb088"/><rect x="35" y="189" width="7" height="7" fill="#a4541c"/><rect x="203" y="189" width="7" height="7" fill="#5e1c18"/><rect x="210" y="189" width="7" height="7" fill="#ff9460"/><rect x="217" y="189" width="14" height="7" fill="#ffc8ac"/><rect x="231" y="189" width="7" height="7" fill="#ff9460"/><rect x="238" y="189" width="7" height="7" fill="#5e1c18"/><rect x="0" y="196" width="35" height="7" fill="#5e1c18"/><rect x="210" y="196" width="35" height="7" fill="#5e1c18"/></g></svg>
<div class="" style="left:14px;top:984px;width:263px;height:20px;background:#535353;"></div>
<div class="" style="left:15px;top:985px;width:46px;height:18px;background:#4a4a4a;"></div>
<div class="t" style="left:26px;top:988px;font-size:10.5px;color:#e8e8e8;font-family:'Liberation Sans',sans-serif;">700%</div>
<div class="" style="left:260px;top:984px;width:17px;height:20px;background:#4a4a4a;"></div>
</div><!-- taskbar -->
<div id="tb" class="a">
<div style="left:8px;top:11px;width:38px;height:38px;border-radius:50%;background:radial-gradient(circle at 50% 40%,#3f7f9a,#1d4a63 70%,#16384c);border:1.500px solid #8aa3ad"></div>
<svg style="left:12px;top:15px" width="30" height="30" viewBox="0 0 30 30" ><g transform="scale(1.154)"><path d="M13 3C7.500 3 3.500 7 3.500 11.500c0 2 1 3.500 2.500 4.500l1.500 4.500h11l1.500-4.500c1.500-1 2.500-2.500 2.500-4.500C22.500 7 18.500 3 13 3z" fill="#3f8ccc" stroke="#f2b431" stroke-width="1.500"/><path d="M13 4v13M9 5l2.500 12M17 5l-2.500 12M5.500 8.500l4.500 8.500M20.500 8.500l-4.500 8.500" stroke="#79b8e6" stroke-width="0.800"/></g></svg>
<div style="left:65px;top:8px;width:16px;height:15px;background:#001e36;border:1.5px solid #26c9ff"></div><div class="t" style="left:67.5px;top:11.5px;font-size:8.5px;color:#31c5f0;font-family:'Liberation Sans',sans-serif;font-weight:bold;letter-spacing:-0.3px">Ps</div>
<div class="t" style="left:85px;top:10px;font-size:12px;color:#fff;letter-spacing:-0.119px;font-family:'Liberation Sans',sans-serif;">Adobe Photoshop CC...</div>
<div class="" style="left:61px;top:29px;width:152px;height:2px;background:#a6a6a6;"></div>
<div style="left:225px;top:8px;width:16px;height:16px;border-radius:50%;background:radial-gradient(circle at 40% 35%,#ff4a3a,#b80000)"></div>
<div class="t" style="left:230px;top:8px;font-size:14px;color:#fff;font-family:'Liberation Serif',serif;font-style:italic;font-weight:bold">f</div>
<svg style="left:258px;top:8px" width="12" height="15" viewBox="0 0 12 15" ><path d="M0 0h12v15h-12z" fill="#ffd96b"/><path d="M8 8h4v7h-4z" fill="#f0c040"/></svg>
<div class="t" style="left:275px;top:10px;font-size:12px;color:#fff;letter-spacing:-0.094px;font-family:'Liberation Sans',sans-serif;">re-do split spread pose</div>
<div class="" style="left:251px;top:29px;width:152px;height:2px;background:#a6a6a6;"></div>
<div style="left:416px;top:8px;width:15px;height:16px;background:#222;border-left:2px solid #3ab54a;border-bottom:2px solid #3ab54a"></div><div class="t" style="left:419px;top:8px;font-size:14px;color:#fff;font-family:'Liberation Sans',sans-serif;font-weight:bold">C</div>
<div class="t" style="left:436px;top:10px;font-size:12px;color:#fff;letter-spacing:-0.155px;font-family:'Liberation Sans',sans-serif;">Recording...</div>
<div class="" style="left:412px;top:29px;width:152px;height:2px;background:#a6a6a6;"></div>
<svg style="left:580px;top:8px" width="12" height="15" viewBox="0 0 12 15" ><path d="M0 0h12v15h-12z" fill="#ffd96b"/><path d="M8 8h4v7h-4z" fill="#f0c040"/></svg>
<div class="t" style="left:597px;top:10px;font-size:12px;color:#fff;letter-spacing:-0.503px;font-family:'Liberation Sans',sans-serif;">Sally</div>
<div class="" style="left:573px;top:29px;width:152px;height:2px;background:#a6a6a6;"></div>
<svg style="left:741px;top:8px" width="12" height="15" viewBox="0 0 12 15" ><path d="M0 0h12v15h-12z" fill="#ffd96b"/><path d="M8 8h4v7h-4z" fill="#f0c040"/></svg>
<div class="t" style="left:758px;top:10px;font-size:12px;color:#fff;letter-spacing:-0.29px;font-family:'Liberation Sans',sans-serif;">sprite_split_spread</div>
<div class="" style="left:734px;top:29px;width:152px;height:2px;background:#a6a6a6;"></div>
<div class="" style="left:891px;top:1px;width:160px;height:30px;background:#474747;"></div>
<svg style="left:901px;top:8px" width="13" height="14" viewBox="0 0 13 14" ><rect x="0.750" y="0.750" width="11.500" height="12" rx="2.500" fill="#fff" stroke="#cfc9cd" stroke-width="1"/><rect x="1.500" y="9.500" width="10" height="3" fill="#7d929e"/><rect x="4" y="3.500" width="1.300" height="3.500" fill="#655561"/><rect x="7.700" y="3.500" width="1.300" height="3.500" fill="#655561"/></svg>
<div class="t" style="left:919px;top:10px;font-size:12px;color:#fff;letter-spacing:-0.099px;font-family:'Liberation Sans',sans-serif;">split-spread-B.aseprit...</div>
<div class="" style="left:891px;top:29px;width:160px;height:2px;background:#b6b6b6;"></div>
<div style="left:1062px;top:7px;width:13px;height:16px;background:#0a2a3c;border:1.500px solid #31c5f0;border-radius:2px"></div><div class="t" style="left:1064.5px;top:12px;font-size:7px;color:#31c5f0;font-family:'Liberation Sans',sans-serif;font-weight:bold;letter-spacing:-0.3px">Ps</div>
<div class="t" style="left:1080px;top:10px;font-size:12px;color:#fff;letter-spacing:-0.091px;font-family:'Liberation Sans',sans-serif;">attempt-1.png @ 700...</div>
<div class="" style="left:1056px;top:29px;width:152px;height:2px;background:#a6a6a6;"></div>
<svg style="left:1727px;top:26px" width="14" height="9" viewBox="0 0 14 9" ><path d="M1 8l6-6l6 6" stroke="#fff" stroke-width="1.400" fill="none"/></svg>
<svg style="left:1750px;top:9px" width="17" height="14" viewBox="0 0 17 14" ><rect x="3" y="0.500" width="12" height="3.500" rx="1.700" fill="#d8282e"/><rect x="0.500" y="4.700" width="14" height="3.500" rx="1.700" fill="#d8282e"/><rect x="1.500" y="9" width="13" height="3.500" rx="1.700" fill="#d8282e"/><circle cx="13" cy="10" r="3" fill="#3f9fd8"/><path d="M11.500 10l1 1l2-2" stroke="#fff" stroke-width="0.800" fill="none"/></svg>
<svg style="left:1776px;top:7px" width="15" height="18" viewBox="0 0 15 18" ><rect x="1.500" y="5" width="7.500" height="11.500" rx="1" fill="none" stroke="#e6e6e6" stroke-width="1.300"/><rect x="2.800" y="1" width="5" height="4" fill="none" stroke="#e6e6e6" stroke-width="1.100"/><path d="M8 14l2 2l4-4.500" stroke="#bdbdbd" stroke-width="1.100" fill="none"/></svg>
<svg style="left:1750px;top:39px" width="17" height="15" viewBox="0 0 17 15" ><rect x="3.500" y="1" width="12" height="8.500" fill="none" stroke="#e6e6e6" stroke-width="1.300"/><path d="M9.500 9.500v3.500M6 13.500h7" stroke="#e6e6e6" stroke-width="1.300" fill="none"/><rect x="0.600" y="2" width="4" height="4" fill="#1c1c1c" stroke="#e6e6e6" stroke-width="1"/><path d="M2.500 6v7.500h2.500" stroke="#e6e6e6" stroke-width="1.100" fill="none"/></svg>
<div class="t" style="left:1808.9px;top:7px;font-size:12px;color:#fff;letter-spacing:-0.482px;font-family:'Liberation Sans',sans-serif;">8:33 PM</div>
<div class="t" style="left:1811px;top:26px;font-size:12px;color:#fff;letter-spacing:-0.44px;font-family:'Liberation Sans',sans-serif;">Sunday</div>
<div class="t" style="left:1804px;top:44px;font-size:12px;color:#fff;letter-spacing:-0.198px;font-family:'Liberation Sans',sans-serif;">6/25/2023</div>
<svg style="left:1879px;top:23px" width="17" height="17" viewBox="0 0 17 17" ><path d="M0.700 0.700h14.600v11.600h-4.800l-2.500 2.500l-2.500-2.500h-4.800z" fill="none" stroke="#fff" stroke-width="1.300"/></svg>
<div class="" style="left:1916px;top:1px;width:1px;height:61px;background:#4c4c4c;"></div>
</div>
</body>
</html>
